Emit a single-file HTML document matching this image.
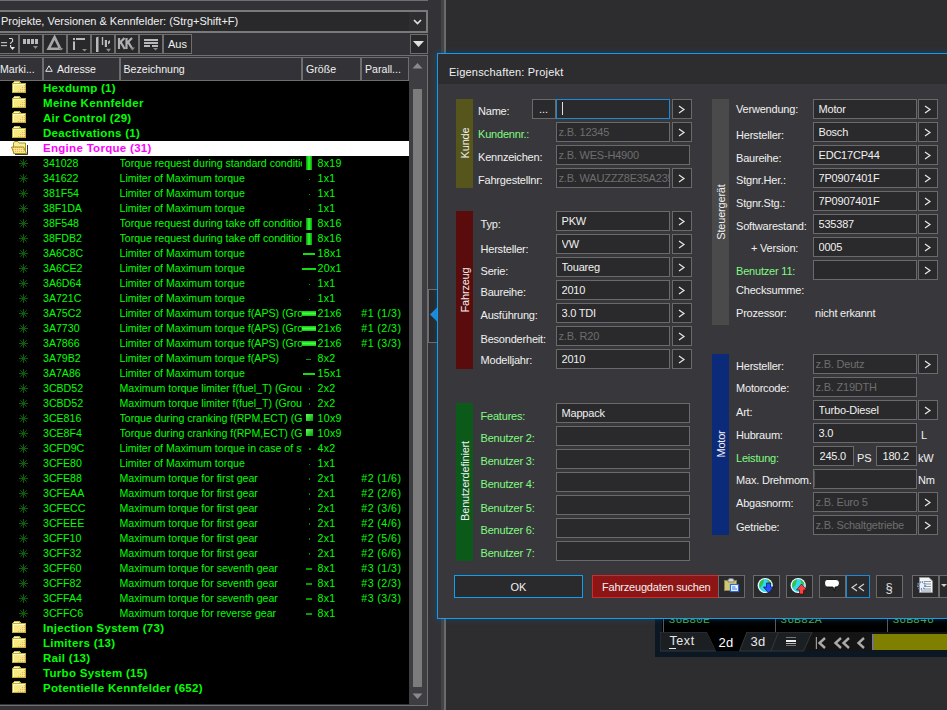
<!DOCTYPE html><html><head><meta charset="utf-8"><style>
html,body{margin:0;padding:0;}
body{width:947px;height:710px;overflow:hidden;position:relative;background:#2d2d30;font-family:"Liberation Sans",sans-serif;}
.r,.t{position:absolute;}
.t{white-space:nowrap;}
</style></head><body>
<div class="r" style="left:0px;top:0px;width:428px;height:710px;background:#333337;"></div>
<div class="r" style="left:0px;top:0px;width:428px;height:1px;background:#707070;"></div>
<div class="r" style="left:-2px;top:10px;width:430px;height:23px;background:#29292b;border:2px solid #7a7a7a;box-sizing:border-box;"></div>
<div class="r" style="left:409px;top:12px;width:17px;height:19px;background:#2e2e31;"></div>
<svg class="r" style="left:413px;top:19px;" width="9" height="6" viewBox="0 0 9 6" shape-rendering="crispEdges"><polyline points="1,1 4.5,4.5 8,1" fill="none" stroke="#e0e0e0" stroke-width="1.7" shape-rendering="auto"/></svg>
<div class="t" style="left:1px;top:15.69px;font-size:11px;line-height:11px;color:#f0f0f0;font-weight:normal;font-family:'Liberation Sans', sans-serif;">Projekte, Versionen &amp; Kennfelder: (Strg+Shift+F)</div>
<div class="r" style="left:-4px;top:34px;width:23px;height:20px;background:#29292b;border:1px solid #6e6e6e;box-sizing:border-box;"></div>
<div class="r" style="left:19px;top:34px;width:24px;height:20px;background:#29292b;border:1px solid #6e6e6e;box-sizing:border-box;"></div>
<div class="r" style="left:43px;top:34px;width:24px;height:20px;background:#29292b;border:1px solid #6e6e6e;box-sizing:border-box;"></div>
<div class="r" style="left:67px;top:34px;width:24px;height:20px;background:#29292b;border:1px solid #6e6e6e;box-sizing:border-box;"></div>
<div class="r" style="left:91px;top:34px;width:24px;height:20px;background:#29292b;border:1px solid #6e6e6e;box-sizing:border-box;"></div>
<div class="r" style="left:115px;top:34px;width:24px;height:20px;background:#29292b;border:1px solid #6e6e6e;box-sizing:border-box;"></div>
<div class="r" style="left:139px;top:34px;width:24px;height:20px;background:#29292b;border:1px solid #6e6e6e;box-sizing:border-box;"></div>
<div class="r" style="left:163px;top:34px;width:29px;height:20px;background:#29292b;border:1px solid #6e6e6e;box-sizing:border-box;"></div>
<svg class="r" style="left:0px;top:34px;shape-rendering:auto;" width="18" height="20" viewBox="0 0 18 20" shape-rendering="crispEdges"><rect x="1" y="8" width="6" height="1.2" fill="#b9b9b9"/><rect x="1" y="11" width="6" height="1.2" fill="#b9b9b9"/><path d="M9 4.5 L11.8 4.5 L12.6 5.5 L12.6 7.3 L10.6 9.2 L10.6 10" fill="none" stroke="#d8d8d8" stroke-width="1.1"/><rect x="10" y="11" width="1.2" height="2" fill="#d8d8d8"/><path d="M10 13 L15 13 L12.5 16 Z" fill="#e8e8e8"/></svg>
<svg class="r" style="left:20px;top:35px;shape-rendering:auto;" width="22" height="18" viewBox="0 0 22 18" shape-rendering="crispEdges"><rect x="3" y="4" width="3" height="5" fill="#b9b9b9"/><rect x="7" y="4" width="3" height="5" fill="#b9b9b9"/><rect x="11" y="4" width="3" height="5" fill="#b9b9b9"/><rect x="15" y="4" width="3" height="5" fill="#b9b9b9"/><path d="M13 11 L18 11 L15.5 14 Z" fill="#8a8a8a"/></svg>
<svg class="r" style="left:44px;top:35px;shape-rendering:auto;" width="22" height="18" viewBox="0 0 22 18" shape-rendering="crispEdges"><path d="M10.6 2.2 L4.6 13.8 L16.2 13.8 Z" fill="none" stroke="#a8a8a8" stroke-width="2.6" stroke-linejoin="miter"/><path d="M14.5 13 L19.2 13 L16.8 15.5 Z" fill="#8a8a8a"/></svg>
<svg class="r" style="left:68px;top:35px;shape-rendering:auto;" width="22" height="18" viewBox="0 0 22 18" shape-rendering="crispEdges"><rect x="5" y="3" width="2" height="2" fill="#b9b9b9"/><rect x="5" y="6.4" width="2" height="8.6" fill="#b9b9b9"/><rect x="8" y="3" width="9" height="2" fill="#b9b9b9"/><path d="M14 14 L19 14 L16.5 16.6 Z" fill="#8a8a8a"/></svg>
<svg class="r" style="left:92px;top:35px;shape-rendering:auto;" width="22" height="18" viewBox="0 0 22 18" shape-rendering="crispEdges"><path d="M4 2.5 L6.5 1.5 L6.5 17 L4 17 Z" fill="#b9b9b9"/><rect x="9.8" y="2" width="1.4" height="8" fill="#b9b9b9"/><rect x="12.8" y="5" width="2.2" height="7" fill="#b9b9b9"/><path d="M16 6.5 L18 5 L18 8 L16 9.5 Z" fill="#b9b9b9"/><path d="M14 13.8 L19 13.8 L16.5 16.9 Z" fill="#8a8a8a"/></svg>
<svg class="r" style="left:116px;top:35px;shape-rendering:auto;" width="22" height="18" viewBox="0 0 22 18" shape-rendering="crispEdges"><path d="M3 3 L3 14 M3 8.6 L8.5 3 M4.8 7.4 L8.8 14 M10.5 3 L10.5 14 M10.5 8.6 L16 3 M12.3 7.4 L16.5 14" fill="none" stroke="#b0b0b0" stroke-width="2.2"/><path d="M14 12.5 L19 12.5 L16.5 15.5 Z" fill="#8a8a8a"/></svg>
<svg class="r" style="left:140px;top:35px;shape-rendering:auto;" width="22" height="18" viewBox="0 0 22 18" shape-rendering="crispEdges"><rect x="4" y="4" width="14" height="2" fill="#b9b9b9"/><rect x="4" y="7" width="14" height="2" fill="#b9b9b9"/><rect x="4" y="10" width="6" height="2" fill="#b9b9b9"/><rect x="12" y="10" width="6" height="2" fill="#b9b9b9"/><path d="M13 13 L18 13 L15.5 15.5 Z" fill="#8a8a8a"/></svg>
<div class="t" style="left:168px;top:38.69px;font-size:11px;line-height:11px;color:#f0f0f0;font-weight:normal;font-family:'Liberation Sans', sans-serif;">Aus</div>
<div class="r" style="left:410px;top:34px;width:18px;height:20px;background:#29292b;border:1px solid #6e6e6e;box-sizing:border-box;"></div>
<svg class="r" style="left:412px;top:40px;" width="13" height="8" viewBox="0 0 13 8" shape-rendering="crispEdges"><path d="M1 1 L12 1 L6.5 7 Z" fill="#e0e0e0" shape-rendering="auto"/></svg>
<div class="r" style="left:0px;top:55px;width:428px;height:1px;background:#707070;"></div>
<div class="r" style="left:-2px;top:57px;width:45px;height:24px;background:#333337;border:1px solid #6e6e6e;box-sizing:border-box;"></div>
<div class="r" style="left:43px;top:57px;width:77px;height:24px;background:#333337;border:1px solid #6e6e6e;box-sizing:border-box;"></div>
<div class="r" style="left:120px;top:57px;width:182px;height:24px;background:#333337;border:1px solid #6e6e6e;box-sizing:border-box;"></div>
<div class="r" style="left:302px;top:57px;width:59px;height:24px;background:#333337;border:1px solid #6e6e6e;box-sizing:border-box;"></div>
<div class="r" style="left:361px;top:57px;width:48px;height:24px;background:#333337;border:1px solid #6e6e6e;box-sizing:border-box;"></div>
<div class="t" style="left:0px;top:64.03px;font-size:10.6px;line-height:10.6px;color:#f0f0f0;font-weight:normal;font-family:'Liberation Sans', sans-serif;">Marki...</div>
<div class="t" style="left:57px;top:64.03px;font-size:10.6px;line-height:10.6px;color:#f0f0f0;font-weight:normal;font-family:'Liberation Sans', sans-serif;">Adresse</div>
<div class="t" style="left:123.5px;top:64.03px;font-size:10.6px;line-height:10.6px;color:#f0f0f0;font-weight:normal;font-family:'Liberation Sans', sans-serif;">Bezeichnung</div>
<div class="t" style="left:306px;top:64.03px;font-size:10.6px;line-height:10.6px;color:#f0f0f0;font-weight:normal;font-family:'Liberation Sans', sans-serif;">Gr&ouml;&szlig;e</div>
<div class="t" style="left:365px;top:64.03px;font-size:10.6px;line-height:10.6px;color:#f0f0f0;font-weight:normal;font-family:'Liberation Sans', sans-serif;">Parall...</div>
<svg class="r" style="left:45px;top:65px;" width="8" height="7" viewBox="0 0 8 7" shape-rendering="crispEdges"><path d="M4 0.8 L7.3 6.3 L0.7 6.3 Z" fill="none" stroke="#e8e8e8" stroke-width="1" shape-rendering="auto"/></svg>
<div class="r" style="left:0px;top:81px;width:409px;height:623px;background:#000;"></div>
<div class="r" style="left:409px;top:56px;width:18px;height:649px;background:#3e3e42;"></div>
<div class="r" style="left:413px;top:89px;width:9px;height:598px;background:#7c7c7c;"></div>
<svg class="r" style="left:412px;top:62px;" width="11" height="7" viewBox="0 0 11 7" shape-rendering="crispEdges"><path d="M0.5 6.5 L5.5 1 L10.5 6.5 Z" fill="#8a8a8a" shape-rendering="auto"/></svg>
<svg class="r" style="left:412px;top:693px;" width="11" height="7" viewBox="0 0 11 7" shape-rendering="crispEdges"><path d="M0.5 0.5 L5.5 6 L10.5 0.5 Z" fill="#8a8a8a" shape-rendering="auto"/></svg>
<div class="r" style="left:427px;top:56px;width:1px;height:650px;background:#707070;"></div>
<div class="r" style="left:0px;top:705px;width:428px;height:1px;background:#707070;"></div>
<svg width="0" height="0" style="position:absolute"><defs><pattern id="pk" width="2" height="2" patternUnits="userSpaceOnUse"><rect x="0" y="0" width="1" height="1" fill="#f0a890"/><rect x="1" y="1" width="1" height="1" fill="#f8e880"/><rect x="1" y="0" width="1" height="1" fill="#f8e880"/><rect x="0" y="1" width="1" height="1" fill="#f8e880"/></pattern></defs></svg>
<svg class="r" style="left:12px;top:81px;" width="14" height="12" viewBox="0 0 14 12" shape-rendering="crispEdges"><path d="M1 2 L2 0 L8 0 L9 2 Z" fill="#c8b840"/><rect x="2" y="0.6" width="5" height="1" fill="#fffbe0"/><rect x="0" y="2" width="14" height="10" fill="#c0b030"/><rect x="1" y="3" width="12" height="8" fill="#f8e880"/><rect x="1" y="3" width="12" height="1" fill="#fffbd8"/><rect x="1" y="3" width="1" height="8" fill="#fffbd8"/><path d="M4 11 L13 4 L13 11 Z" fill="url(#pk)"/></svg>
<div class="t" style="left:43px;top:82.77px;font-size:11.5px;line-height:11.5px;color:#00ff00;font-weight:bold;font-family:'Liberation Sans', sans-serif;letter-spacing:0.3px;">Hexdump (1)</div>
<svg class="r" style="left:12px;top:96px;" width="14" height="12" viewBox="0 0 14 12" shape-rendering="crispEdges"><path d="M1 2 L2 0 L8 0 L9 2 Z" fill="#c8b840"/><rect x="2" y="0.6" width="5" height="1" fill="#fffbe0"/><rect x="0" y="2" width="14" height="10" fill="#c0b030"/><rect x="1" y="3" width="12" height="8" fill="#f8e880"/><rect x="1" y="3" width="12" height="1" fill="#fffbd8"/><rect x="1" y="3" width="1" height="8" fill="#fffbd8"/><path d="M4 11 L13 4 L13 11 Z" fill="url(#pk)"/></svg>
<div class="t" style="left:43px;top:97.77px;font-size:11.5px;line-height:11.5px;color:#00ff00;font-weight:bold;font-family:'Liberation Sans', sans-serif;letter-spacing:0.3px;">Meine Kennfelder</div>
<svg class="r" style="left:12px;top:111px;" width="14" height="12" viewBox="0 0 14 12" shape-rendering="crispEdges"><path d="M1 2 L2 0 L8 0 L9 2 Z" fill="#c8b840"/><rect x="2" y="0.6" width="5" height="1" fill="#fffbe0"/><rect x="0" y="2" width="14" height="10" fill="#c0b030"/><rect x="1" y="3" width="12" height="8" fill="#f8e880"/><rect x="1" y="3" width="12" height="1" fill="#fffbd8"/><rect x="1" y="3" width="1" height="8" fill="#fffbd8"/><path d="M4 11 L13 4 L13 11 Z" fill="url(#pk)"/></svg>
<div class="t" style="left:43px;top:112.77px;font-size:11.5px;line-height:11.5px;color:#00ff00;font-weight:bold;font-family:'Liberation Sans', sans-serif;letter-spacing:0.3px;">Air Control (29)</div>
<svg class="r" style="left:12px;top:126px;" width="14" height="12" viewBox="0 0 14 12" shape-rendering="crispEdges"><path d="M1 2 L2 0 L8 0 L9 2 Z" fill="#c8b840"/><rect x="2" y="0.6" width="5" height="1" fill="#fffbe0"/><rect x="0" y="2" width="14" height="10" fill="#c0b030"/><rect x="1" y="3" width="12" height="8" fill="#f8e880"/><rect x="1" y="3" width="12" height="1" fill="#fffbd8"/><rect x="1" y="3" width="1" height="8" fill="#fffbd8"/><path d="M4 11 L13 4 L13 11 Z" fill="url(#pk)"/></svg>
<div class="t" style="left:43px;top:127.77px;font-size:11.5px;line-height:11.5px;color:#00ff00;font-weight:bold;font-family:'Liberation Sans', sans-serif;letter-spacing:0.3px;">Deactivations (1)</div>
<div class="r" style="left:0px;top:141px;width:409px;height:15px;background:#fff;"></div>
<svg class="r" style="left:11px;top:141px;" width="17" height="14" viewBox="0 0 17 14" shape-rendering="crispEdges"><path d="M2.5 2 L3.5 0.5 L7 0.5 L8 2 L14.5 2 L14.5 12.5 L2.5 12.5 Z" fill="#f8ec98" stroke="#a89818" stroke-width="1" shape-rendering="auto"/><path d="M0.5 6 L12.5 6 L15.5 12.5 L3 12.5 Z" fill="url(#pk)" stroke="#a09010" stroke-width="1" shape-rendering="auto"/><path d="M4 13 L16 13 L16 4 L16.8 4 L16.8 13.8 L4 13.8 Z" fill="#000" shape-rendering="auto"/></svg>
<div class="t" style="left:43px;top:142.77px;font-size:11.5px;line-height:11.5px;color:#ff00ff;font-weight:bold;font-family:'Liberation Sans', sans-serif;letter-spacing:0.3px;">Engine Torque (31)</div>
<svg class="r" style="left:19.0px;top:159.0px;shape-rendering:auto;" width="9" height="9" viewBox="0 0 9 9" shape-rendering="crispEdges"><line x1="0.00" y1="4.50" x2="9.00" y2="4.50" stroke="#0a600a" stroke-width="1"/><line x1="1.32" y1="1.32" x2="7.68" y2="7.68" stroke="#0a600a" stroke-width="1"/><line x1="4.50" y1="0.00" x2="4.50" y2="9.00" stroke="#0a600a" stroke-width="1"/><line x1="7.68" y1="1.32" x2="1.32" y2="7.68" stroke="#0a600a" stroke-width="1"/><circle cx="4.5" cy="4.5" r="1.3" fill="#0a600a"/></svg>
<div class="t" style="left:43px;top:158.03px;font-size:10.6px;line-height:10.6px;color:#00ff00;font-weight:normal;font-family:'Liberation Sans', sans-serif;">341028</div>
<div class="t" style="left:119.5px;top:158.03px;font-size:10.6px;line-height:10.6px;color:#00ff00;font-weight:normal;font-family:'Liberation Sans', sans-serif;width:182.5px;overflow:hidden;">Torque request during standard conditions</div>
<div class="r" style="left:306px;top:156px;width:6px;height:14px;background:linear-gradient(90deg,#0a8a0a,#30ff30 50%,#0a9a0a);"></div>
<div class="t" style="left:317.5px;top:158.03px;font-size:10.6px;line-height:10.6px;color:#00ff00;font-weight:normal;font-family:'Liberation Sans', sans-serif;letter-spacing:0.3px;">8x19</div>
<svg class="r" style="left:19.0px;top:174.0px;shape-rendering:auto;" width="9" height="9" viewBox="0 0 9 9" shape-rendering="crispEdges"><line x1="0.00" y1="4.50" x2="9.00" y2="4.50" stroke="#0a600a" stroke-width="1"/><line x1="1.32" y1="1.32" x2="7.68" y2="7.68" stroke="#0a600a" stroke-width="1"/><line x1="4.50" y1="0.00" x2="4.50" y2="9.00" stroke="#0a600a" stroke-width="1"/><line x1="7.68" y1="1.32" x2="1.32" y2="7.68" stroke="#0a600a" stroke-width="1"/><circle cx="4.5" cy="4.5" r="1.3" fill="#0a600a"/></svg>
<div class="t" style="left:43px;top:173.03px;font-size:10.6px;line-height:10.6px;color:#00ff00;font-weight:normal;font-family:'Liberation Sans', sans-serif;">341622</div>
<div class="t" style="left:119.5px;top:173.03px;font-size:10.6px;line-height:10.6px;color:#00ff00;font-weight:normal;font-family:'Liberation Sans', sans-serif;width:182.5px;overflow:hidden;">Limiter of Maximum torque</div>
<div class="r" style="left:309px;top:179px;width:1px;height:1px;background:#0a8a0a;"></div>
<div class="t" style="left:317.5px;top:173.03px;font-size:10.6px;line-height:10.6px;color:#00ff00;font-weight:normal;font-family:'Liberation Sans', sans-serif;letter-spacing:0.3px;">1x1</div>
<svg class="r" style="left:19.0px;top:189.0px;shape-rendering:auto;" width="9" height="9" viewBox="0 0 9 9" shape-rendering="crispEdges"><line x1="0.00" y1="4.50" x2="9.00" y2="4.50" stroke="#0a600a" stroke-width="1"/><line x1="1.32" y1="1.32" x2="7.68" y2="7.68" stroke="#0a600a" stroke-width="1"/><line x1="4.50" y1="0.00" x2="4.50" y2="9.00" stroke="#0a600a" stroke-width="1"/><line x1="7.68" y1="1.32" x2="1.32" y2="7.68" stroke="#0a600a" stroke-width="1"/><circle cx="4.5" cy="4.5" r="1.3" fill="#0a600a"/></svg>
<div class="t" style="left:43px;top:188.03px;font-size:10.6px;line-height:10.6px;color:#00ff00;font-weight:normal;font-family:'Liberation Sans', sans-serif;">381F54</div>
<div class="t" style="left:119.5px;top:188.03px;font-size:10.6px;line-height:10.6px;color:#00ff00;font-weight:normal;font-family:'Liberation Sans', sans-serif;width:182.5px;overflow:hidden;">Limiter of Maximum torque</div>
<div class="r" style="left:309px;top:194px;width:1px;height:1px;background:#0a8a0a;"></div>
<div class="t" style="left:317.5px;top:188.03px;font-size:10.6px;line-height:10.6px;color:#00ff00;font-weight:normal;font-family:'Liberation Sans', sans-serif;letter-spacing:0.3px;">1x1</div>
<svg class="r" style="left:19.0px;top:204.0px;shape-rendering:auto;" width="9" height="9" viewBox="0 0 9 9" shape-rendering="crispEdges"><line x1="0.00" y1="4.50" x2="9.00" y2="4.50" stroke="#0a600a" stroke-width="1"/><line x1="1.32" y1="1.32" x2="7.68" y2="7.68" stroke="#0a600a" stroke-width="1"/><line x1="4.50" y1="0.00" x2="4.50" y2="9.00" stroke="#0a600a" stroke-width="1"/><line x1="7.68" y1="1.32" x2="1.32" y2="7.68" stroke="#0a600a" stroke-width="1"/><circle cx="4.5" cy="4.5" r="1.3" fill="#0a600a"/></svg>
<div class="t" style="left:43px;top:203.03px;font-size:10.6px;line-height:10.6px;color:#00ff00;font-weight:normal;font-family:'Liberation Sans', sans-serif;">38F1DA</div>
<div class="t" style="left:119.5px;top:203.03px;font-size:10.6px;line-height:10.6px;color:#00ff00;font-weight:normal;font-family:'Liberation Sans', sans-serif;width:182.5px;overflow:hidden;">Limiter of Maximum torque</div>
<div class="r" style="left:309px;top:209px;width:1px;height:1px;background:#0a8a0a;"></div>
<div class="t" style="left:317.5px;top:203.03px;font-size:10.6px;line-height:10.6px;color:#00ff00;font-weight:normal;font-family:'Liberation Sans', sans-serif;letter-spacing:0.3px;">1x1</div>
<svg class="r" style="left:19.0px;top:219.0px;shape-rendering:auto;" width="9" height="9" viewBox="0 0 9 9" shape-rendering="crispEdges"><line x1="0.00" y1="4.50" x2="9.00" y2="4.50" stroke="#0a600a" stroke-width="1"/><line x1="1.32" y1="1.32" x2="7.68" y2="7.68" stroke="#0a600a" stroke-width="1"/><line x1="4.50" y1="0.00" x2="4.50" y2="9.00" stroke="#0a600a" stroke-width="1"/><line x1="7.68" y1="1.32" x2="1.32" y2="7.68" stroke="#0a600a" stroke-width="1"/><circle cx="4.5" cy="4.5" r="1.3" fill="#0a600a"/></svg>
<div class="t" style="left:43px;top:218.03px;font-size:10.6px;line-height:10.6px;color:#00ff00;font-weight:normal;font-family:'Liberation Sans', sans-serif;">38F548</div>
<div class="t" style="left:119.5px;top:218.03px;font-size:10.6px;line-height:10.6px;color:#00ff00;font-weight:normal;font-family:'Liberation Sans', sans-serif;width:182.5px;overflow:hidden;">Torque request during take off conditions</div>
<div class="r" style="left:306px;top:218px;width:6px;height:12px;background:linear-gradient(90deg,#0a8a0a,#30ff30 50%,#0a9a0a);"></div>
<div class="t" style="left:317.5px;top:218.03px;font-size:10.6px;line-height:10.6px;color:#00ff00;font-weight:normal;font-family:'Liberation Sans', sans-serif;letter-spacing:0.3px;">8x16</div>
<svg class="r" style="left:19.0px;top:234.0px;shape-rendering:auto;" width="9" height="9" viewBox="0 0 9 9" shape-rendering="crispEdges"><line x1="0.00" y1="4.50" x2="9.00" y2="4.50" stroke="#0a600a" stroke-width="1"/><line x1="1.32" y1="1.32" x2="7.68" y2="7.68" stroke="#0a600a" stroke-width="1"/><line x1="4.50" y1="0.00" x2="4.50" y2="9.00" stroke="#0a600a" stroke-width="1"/><line x1="7.68" y1="1.32" x2="1.32" y2="7.68" stroke="#0a600a" stroke-width="1"/><circle cx="4.5" cy="4.5" r="1.3" fill="#0a600a"/></svg>
<div class="t" style="left:43px;top:233.03px;font-size:10.6px;line-height:10.6px;color:#00ff00;font-weight:normal;font-family:'Liberation Sans', sans-serif;">38FDB2</div>
<div class="t" style="left:119.5px;top:233.03px;font-size:10.6px;line-height:10.6px;color:#00ff00;font-weight:normal;font-family:'Liberation Sans', sans-serif;width:182.5px;overflow:hidden;">Torque request during take off conditions</div>
<div class="r" style="left:306px;top:233px;width:6px;height:12px;background:linear-gradient(90deg,#0a8a0a,#30ff30 50%,#0a9a0a);"></div>
<div class="t" style="left:317.5px;top:233.03px;font-size:10.6px;line-height:10.6px;color:#00ff00;font-weight:normal;font-family:'Liberation Sans', sans-serif;letter-spacing:0.3px;">8x16</div>
<svg class="r" style="left:19.0px;top:249.0px;shape-rendering:auto;" width="9" height="9" viewBox="0 0 9 9" shape-rendering="crispEdges"><line x1="0.00" y1="4.50" x2="9.00" y2="4.50" stroke="#0a600a" stroke-width="1"/><line x1="1.32" y1="1.32" x2="7.68" y2="7.68" stroke="#0a600a" stroke-width="1"/><line x1="4.50" y1="0.00" x2="4.50" y2="9.00" stroke="#0a600a" stroke-width="1"/><line x1="7.68" y1="1.32" x2="1.32" y2="7.68" stroke="#0a600a" stroke-width="1"/><circle cx="4.5" cy="4.5" r="1.3" fill="#0a600a"/></svg>
<div class="t" style="left:43px;top:248.03px;font-size:10.6px;line-height:10.6px;color:#00ff00;font-weight:normal;font-family:'Liberation Sans', sans-serif;">3A6C8C</div>
<div class="t" style="left:119.5px;top:248.03px;font-size:10.6px;line-height:10.6px;color:#00ff00;font-weight:normal;font-family:'Liberation Sans', sans-serif;width:182.5px;overflow:hidden;">Limiter of Maximum torque</div>
<div class="r" style="left:303px;top:253px;width:12px;height:2px;background:#10e010;"></div>
<div class="t" style="left:317.5px;top:248.03px;font-size:10.6px;line-height:10.6px;color:#00ff00;font-weight:normal;font-family:'Liberation Sans', sans-serif;letter-spacing:0.3px;">18x1</div>
<svg class="r" style="left:19.0px;top:264.0px;shape-rendering:auto;" width="9" height="9" viewBox="0 0 9 9" shape-rendering="crispEdges"><line x1="0.00" y1="4.50" x2="9.00" y2="4.50" stroke="#0a600a" stroke-width="1"/><line x1="1.32" y1="1.32" x2="7.68" y2="7.68" stroke="#0a600a" stroke-width="1"/><line x1="4.50" y1="0.00" x2="4.50" y2="9.00" stroke="#0a600a" stroke-width="1"/><line x1="7.68" y1="1.32" x2="1.32" y2="7.68" stroke="#0a600a" stroke-width="1"/><circle cx="4.5" cy="4.5" r="1.3" fill="#0a600a"/></svg>
<div class="t" style="left:43px;top:263.03px;font-size:10.6px;line-height:10.6px;color:#00ff00;font-weight:normal;font-family:'Liberation Sans', sans-serif;">3A6CE2</div>
<div class="t" style="left:119.5px;top:263.03px;font-size:10.6px;line-height:10.6px;color:#00ff00;font-weight:normal;font-family:'Liberation Sans', sans-serif;width:182.5px;overflow:hidden;">Limiter of Maximum torque</div>
<div class="r" style="left:302px;top:268px;width:14px;height:2px;background:#10e010;"></div>
<div class="t" style="left:317.5px;top:263.03px;font-size:10.6px;line-height:10.6px;color:#00ff00;font-weight:normal;font-family:'Liberation Sans', sans-serif;letter-spacing:0.3px;">20x1</div>
<svg class="r" style="left:19.0px;top:279.0px;shape-rendering:auto;" width="9" height="9" viewBox="0 0 9 9" shape-rendering="crispEdges"><line x1="0.00" y1="4.50" x2="9.00" y2="4.50" stroke="#0a600a" stroke-width="1"/><line x1="1.32" y1="1.32" x2="7.68" y2="7.68" stroke="#0a600a" stroke-width="1"/><line x1="4.50" y1="0.00" x2="4.50" y2="9.00" stroke="#0a600a" stroke-width="1"/><line x1="7.68" y1="1.32" x2="1.32" y2="7.68" stroke="#0a600a" stroke-width="1"/><circle cx="4.5" cy="4.5" r="1.3" fill="#0a600a"/></svg>
<div class="t" style="left:43px;top:278.03px;font-size:10.6px;line-height:10.6px;color:#00ff00;font-weight:normal;font-family:'Liberation Sans', sans-serif;">3A6D64</div>
<div class="t" style="left:119.5px;top:278.03px;font-size:10.6px;line-height:10.6px;color:#00ff00;font-weight:normal;font-family:'Liberation Sans', sans-serif;width:182.5px;overflow:hidden;">Limiter of Maximum torque</div>
<div class="r" style="left:309px;top:284px;width:1px;height:1px;background:#0a8a0a;"></div>
<div class="t" style="left:317.5px;top:278.03px;font-size:10.6px;line-height:10.6px;color:#00ff00;font-weight:normal;font-family:'Liberation Sans', sans-serif;letter-spacing:0.3px;">1x1</div>
<svg class="r" style="left:19.0px;top:294.0px;shape-rendering:auto;" width="9" height="9" viewBox="0 0 9 9" shape-rendering="crispEdges"><line x1="0.00" y1="4.50" x2="9.00" y2="4.50" stroke="#0a600a" stroke-width="1"/><line x1="1.32" y1="1.32" x2="7.68" y2="7.68" stroke="#0a600a" stroke-width="1"/><line x1="4.50" y1="0.00" x2="4.50" y2="9.00" stroke="#0a600a" stroke-width="1"/><line x1="7.68" y1="1.32" x2="1.32" y2="7.68" stroke="#0a600a" stroke-width="1"/><circle cx="4.5" cy="4.5" r="1.3" fill="#0a600a"/></svg>
<div class="t" style="left:43px;top:293.03px;font-size:10.6px;line-height:10.6px;color:#00ff00;font-weight:normal;font-family:'Liberation Sans', sans-serif;">3A721C</div>
<div class="t" style="left:119.5px;top:293.03px;font-size:10.6px;line-height:10.6px;color:#00ff00;font-weight:normal;font-family:'Liberation Sans', sans-serif;width:182.5px;overflow:hidden;">Limiter of Maximum torque</div>
<div class="r" style="left:309px;top:299px;width:1px;height:1px;background:#0a8a0a;"></div>
<div class="t" style="left:317.5px;top:293.03px;font-size:10.6px;line-height:10.6px;color:#00ff00;font-weight:normal;font-family:'Liberation Sans', sans-serif;letter-spacing:0.3px;">1x1</div>
<svg class="r" style="left:19.0px;top:309.0px;shape-rendering:auto;" width="9" height="9" viewBox="0 0 9 9" shape-rendering="crispEdges"><line x1="0.00" y1="4.50" x2="9.00" y2="4.50" stroke="#0a600a" stroke-width="1"/><line x1="1.32" y1="1.32" x2="7.68" y2="7.68" stroke="#0a600a" stroke-width="1"/><line x1="4.50" y1="0.00" x2="4.50" y2="9.00" stroke="#0a600a" stroke-width="1"/><line x1="7.68" y1="1.32" x2="1.32" y2="7.68" stroke="#0a600a" stroke-width="1"/><circle cx="4.5" cy="4.5" r="1.3" fill="#0a600a"/></svg>
<div class="t" style="left:43px;top:308.03px;font-size:10.6px;line-height:10.6px;color:#00ff00;font-weight:normal;font-family:'Liberation Sans', sans-serif;">3A75C2</div>
<div class="t" style="left:119.5px;top:308.03px;font-size:10.6px;line-height:10.6px;color:#00ff00;font-weight:normal;font-family:'Liberation Sans', sans-serif;width:182.5px;overflow:hidden;">Limiter of Maximum torque f(APS) (Group 1)</div>
<div class="r" style="left:302px;top:311px;width:14px;height:5px;background:linear-gradient(180deg,#10c010,#40ff40 50%,#10c010);"></div>
<div class="t" style="left:317.5px;top:308.03px;font-size:10.6px;line-height:10.6px;color:#00ff00;font-weight:normal;font-family:'Liberation Sans', sans-serif;letter-spacing:0.3px;">21x6</div>
<div class="t" style="left:361.3px;top:308.03px;font-size:10.6px;line-height:10.6px;color:#00ff00;font-weight:normal;font-family:'Liberation Sans', sans-serif;letter-spacing:0.45px;">#1 (1/3)</div>
<svg class="r" style="left:19.0px;top:324.0px;shape-rendering:auto;" width="9" height="9" viewBox="0 0 9 9" shape-rendering="crispEdges"><line x1="0.00" y1="4.50" x2="9.00" y2="4.50" stroke="#0a600a" stroke-width="1"/><line x1="1.32" y1="1.32" x2="7.68" y2="7.68" stroke="#0a600a" stroke-width="1"/><line x1="4.50" y1="0.00" x2="4.50" y2="9.00" stroke="#0a600a" stroke-width="1"/><line x1="7.68" y1="1.32" x2="1.32" y2="7.68" stroke="#0a600a" stroke-width="1"/><circle cx="4.5" cy="4.5" r="1.3" fill="#0a600a"/></svg>
<div class="t" style="left:43px;top:323.03px;font-size:10.6px;line-height:10.6px;color:#00ff00;font-weight:normal;font-family:'Liberation Sans', sans-serif;">3A7730</div>
<div class="t" style="left:119.5px;top:323.03px;font-size:10.6px;line-height:10.6px;color:#00ff00;font-weight:normal;font-family:'Liberation Sans', sans-serif;width:182.5px;overflow:hidden;">Limiter of Maximum torque f(APS) (Group 1)</div>
<div class="r" style="left:302px;top:326px;width:14px;height:5px;background:linear-gradient(180deg,#10c010,#40ff40 50%,#10c010);"></div>
<div class="t" style="left:317.5px;top:323.03px;font-size:10.6px;line-height:10.6px;color:#00ff00;font-weight:normal;font-family:'Liberation Sans', sans-serif;letter-spacing:0.3px;">21x6</div>
<div class="t" style="left:361.3px;top:323.03px;font-size:10.6px;line-height:10.6px;color:#00ff00;font-weight:normal;font-family:'Liberation Sans', sans-serif;letter-spacing:0.45px;">#1 (2/3)</div>
<svg class="r" style="left:19.0px;top:339.0px;shape-rendering:auto;" width="9" height="9" viewBox="0 0 9 9" shape-rendering="crispEdges"><line x1="0.00" y1="4.50" x2="9.00" y2="4.50" stroke="#0a600a" stroke-width="1"/><line x1="1.32" y1="1.32" x2="7.68" y2="7.68" stroke="#0a600a" stroke-width="1"/><line x1="4.50" y1="0.00" x2="4.50" y2="9.00" stroke="#0a600a" stroke-width="1"/><line x1="7.68" y1="1.32" x2="1.32" y2="7.68" stroke="#0a600a" stroke-width="1"/><circle cx="4.5" cy="4.5" r="1.3" fill="#0a600a"/></svg>
<div class="t" style="left:43px;top:338.03px;font-size:10.6px;line-height:10.6px;color:#00ff00;font-weight:normal;font-family:'Liberation Sans', sans-serif;">3A7866</div>
<div class="t" style="left:119.5px;top:338.03px;font-size:10.6px;line-height:10.6px;color:#00ff00;font-weight:normal;font-family:'Liberation Sans', sans-serif;width:182.5px;overflow:hidden;">Limiter of Maximum torque f(APS) (Group 1)</div>
<div class="r" style="left:302px;top:341px;width:14px;height:5px;background:linear-gradient(180deg,#10c010,#40ff40 50%,#10c010);"></div>
<div class="t" style="left:317.5px;top:338.03px;font-size:10.6px;line-height:10.6px;color:#00ff00;font-weight:normal;font-family:'Liberation Sans', sans-serif;letter-spacing:0.3px;">21x6</div>
<div class="t" style="left:361.3px;top:338.03px;font-size:10.6px;line-height:10.6px;color:#00ff00;font-weight:normal;font-family:'Liberation Sans', sans-serif;letter-spacing:0.45px;">#1 (3/3)</div>
<svg class="r" style="left:19.0px;top:354.0px;shape-rendering:auto;" width="9" height="9" viewBox="0 0 9 9" shape-rendering="crispEdges"><line x1="0.00" y1="4.50" x2="9.00" y2="4.50" stroke="#0a600a" stroke-width="1"/><line x1="1.32" y1="1.32" x2="7.68" y2="7.68" stroke="#0a600a" stroke-width="1"/><line x1="4.50" y1="0.00" x2="4.50" y2="9.00" stroke="#0a600a" stroke-width="1"/><line x1="7.68" y1="1.32" x2="1.32" y2="7.68" stroke="#0a600a" stroke-width="1"/><circle cx="4.5" cy="4.5" r="1.3" fill="#0a600a"/></svg>
<div class="t" style="left:43px;top:353.03px;font-size:10.6px;line-height:10.6px;color:#00ff00;font-weight:normal;font-family:'Liberation Sans', sans-serif;">3A79B2</div>
<div class="t" style="left:119.5px;top:353.03px;font-size:10.6px;line-height:10.6px;color:#00ff00;font-weight:normal;font-family:'Liberation Sans', sans-serif;width:182.5px;overflow:hidden;">Limiter of Maximum torque f(APS)</div>
<div class="r" style="left:306px;top:359px;width:5px;height:1px;background:#0a9a0a;"></div>
<div class="t" style="left:317.5px;top:353.03px;font-size:10.6px;line-height:10.6px;color:#00ff00;font-weight:normal;font-family:'Liberation Sans', sans-serif;letter-spacing:0.3px;">8x2</div>
<svg class="r" style="left:19.0px;top:369.0px;shape-rendering:auto;" width="9" height="9" viewBox="0 0 9 9" shape-rendering="crispEdges"><line x1="0.00" y1="4.50" x2="9.00" y2="4.50" stroke="#0a600a" stroke-width="1"/><line x1="1.32" y1="1.32" x2="7.68" y2="7.68" stroke="#0a600a" stroke-width="1"/><line x1="4.50" y1="0.00" x2="4.50" y2="9.00" stroke="#0a600a" stroke-width="1"/><line x1="7.68" y1="1.32" x2="1.32" y2="7.68" stroke="#0a600a" stroke-width="1"/><circle cx="4.5" cy="4.5" r="1.3" fill="#0a600a"/></svg>
<div class="t" style="left:43px;top:368.03px;font-size:10.6px;line-height:10.6px;color:#00ff00;font-weight:normal;font-family:'Liberation Sans', sans-serif;">3A7A86</div>
<div class="t" style="left:119.5px;top:368.03px;font-size:10.6px;line-height:10.6px;color:#00ff00;font-weight:normal;font-family:'Liberation Sans', sans-serif;width:182.5px;overflow:hidden;">Limiter of Maximum torque</div>
<div class="r" style="left:303px;top:373px;width:12px;height:2px;background:#10e010;"></div>
<div class="t" style="left:317.5px;top:368.03px;font-size:10.6px;line-height:10.6px;color:#00ff00;font-weight:normal;font-family:'Liberation Sans', sans-serif;letter-spacing:0.3px;">15x1</div>
<svg class="r" style="left:19.0px;top:384.0px;shape-rendering:auto;" width="9" height="9" viewBox="0 0 9 9" shape-rendering="crispEdges"><line x1="0.00" y1="4.50" x2="9.00" y2="4.50" stroke="#0a600a" stroke-width="1"/><line x1="1.32" y1="1.32" x2="7.68" y2="7.68" stroke="#0a600a" stroke-width="1"/><line x1="4.50" y1="0.00" x2="4.50" y2="9.00" stroke="#0a600a" stroke-width="1"/><line x1="7.68" y1="1.32" x2="1.32" y2="7.68" stroke="#0a600a" stroke-width="1"/><circle cx="4.5" cy="4.5" r="1.3" fill="#0a600a"/></svg>
<div class="t" style="left:43px;top:383.03px;font-size:10.6px;line-height:10.6px;color:#00ff00;font-weight:normal;font-family:'Liberation Sans', sans-serif;">3CBD52</div>
<div class="t" style="left:119.5px;top:383.03px;font-size:10.6px;line-height:10.6px;color:#00ff00;font-weight:normal;font-family:'Liberation Sans', sans-serif;width:182.5px;overflow:hidden;">Maximum torque limiter f(fuel_T) (Group 4)</div>
<div class="r" style="left:309px;top:388px;width:1px;height:2px;background:#0a8a0a;"></div>
<div class="t" style="left:317.5px;top:383.03px;font-size:10.6px;line-height:10.6px;color:#00ff00;font-weight:normal;font-family:'Liberation Sans', sans-serif;letter-spacing:0.3px;">2x2</div>
<svg class="r" style="left:19.0px;top:399.0px;shape-rendering:auto;" width="9" height="9" viewBox="0 0 9 9" shape-rendering="crispEdges"><line x1="0.00" y1="4.50" x2="9.00" y2="4.50" stroke="#0a600a" stroke-width="1"/><line x1="1.32" y1="1.32" x2="7.68" y2="7.68" stroke="#0a600a" stroke-width="1"/><line x1="4.50" y1="0.00" x2="4.50" y2="9.00" stroke="#0a600a" stroke-width="1"/><line x1="7.68" y1="1.32" x2="1.32" y2="7.68" stroke="#0a600a" stroke-width="1"/><circle cx="4.5" cy="4.5" r="1.3" fill="#0a600a"/></svg>
<div class="t" style="left:43px;top:398.03px;font-size:10.6px;line-height:10.6px;color:#00ff00;font-weight:normal;font-family:'Liberation Sans', sans-serif;">3CBD52</div>
<div class="t" style="left:119.5px;top:398.03px;font-size:10.6px;line-height:10.6px;color:#00ff00;font-weight:normal;font-family:'Liberation Sans', sans-serif;width:182.5px;overflow:hidden;">Maximum torque limiter f(fuel_T) (Group 4)</div>
<div class="r" style="left:309px;top:403px;width:1px;height:2px;background:#0a8a0a;"></div>
<div class="t" style="left:317.5px;top:398.03px;font-size:10.6px;line-height:10.6px;color:#00ff00;font-weight:normal;font-family:'Liberation Sans', sans-serif;letter-spacing:0.3px;">2x2</div>
<svg class="r" style="left:19.0px;top:414.0px;shape-rendering:auto;" width="9" height="9" viewBox="0 0 9 9" shape-rendering="crispEdges"><line x1="0.00" y1="4.50" x2="9.00" y2="4.50" stroke="#0a600a" stroke-width="1"/><line x1="1.32" y1="1.32" x2="7.68" y2="7.68" stroke="#0a600a" stroke-width="1"/><line x1="4.50" y1="0.00" x2="4.50" y2="9.00" stroke="#0a600a" stroke-width="1"/><line x1="7.68" y1="1.32" x2="1.32" y2="7.68" stroke="#0a600a" stroke-width="1"/><circle cx="4.5" cy="4.5" r="1.3" fill="#0a600a"/></svg>
<div class="t" style="left:43px;top:413.03px;font-size:10.6px;line-height:10.6px;color:#00ff00;font-weight:normal;font-family:'Liberation Sans', sans-serif;">3CE816</div>
<div class="t" style="left:119.5px;top:413.03px;font-size:10.6px;line-height:10.6px;color:#00ff00;font-weight:normal;font-family:'Liberation Sans', sans-serif;width:182.5px;overflow:hidden;">Torque during cranking f(RPM,ECT) (Group 5)</div>
<div class="r" style="left:306px;top:414px;width:7px;height:7px;background:linear-gradient(135deg,#60ff60,#00a000);"></div>
<div class="t" style="left:317.5px;top:413.03px;font-size:10.6px;line-height:10.6px;color:#00ff00;font-weight:normal;font-family:'Liberation Sans', sans-serif;letter-spacing:0.3px;">10x9</div>
<svg class="r" style="left:19.0px;top:429.0px;shape-rendering:auto;" width="9" height="9" viewBox="0 0 9 9" shape-rendering="crispEdges"><line x1="0.00" y1="4.50" x2="9.00" y2="4.50" stroke="#0a600a" stroke-width="1"/><line x1="1.32" y1="1.32" x2="7.68" y2="7.68" stroke="#0a600a" stroke-width="1"/><line x1="4.50" y1="0.00" x2="4.50" y2="9.00" stroke="#0a600a" stroke-width="1"/><line x1="7.68" y1="1.32" x2="1.32" y2="7.68" stroke="#0a600a" stroke-width="1"/><circle cx="4.5" cy="4.5" r="1.3" fill="#0a600a"/></svg>
<div class="t" style="left:43px;top:428.03px;font-size:10.6px;line-height:10.6px;color:#00ff00;font-weight:normal;font-family:'Liberation Sans', sans-serif;">3CE8F4</div>
<div class="t" style="left:119.5px;top:428.03px;font-size:10.6px;line-height:10.6px;color:#00ff00;font-weight:normal;font-family:'Liberation Sans', sans-serif;width:182.5px;overflow:hidden;">Torque during cranking f(RPM,ECT) (Group 5)</div>
<div class="r" style="left:306px;top:429px;width:7px;height:7px;background:linear-gradient(135deg,#60ff60,#00a000);"></div>
<div class="t" style="left:317.5px;top:428.03px;font-size:10.6px;line-height:10.6px;color:#00ff00;font-weight:normal;font-family:'Liberation Sans', sans-serif;letter-spacing:0.3px;">10x9</div>
<svg class="r" style="left:19.0px;top:444.0px;shape-rendering:auto;" width="9" height="9" viewBox="0 0 9 9" shape-rendering="crispEdges"><line x1="0.00" y1="4.50" x2="9.00" y2="4.50" stroke="#0a600a" stroke-width="1"/><line x1="1.32" y1="1.32" x2="7.68" y2="7.68" stroke="#0a600a" stroke-width="1"/><line x1="4.50" y1="0.00" x2="4.50" y2="9.00" stroke="#0a600a" stroke-width="1"/><line x1="7.68" y1="1.32" x2="1.32" y2="7.68" stroke="#0a600a" stroke-width="1"/><circle cx="4.5" cy="4.5" r="1.3" fill="#0a600a"/></svg>
<div class="t" style="left:43px;top:443.03px;font-size:10.6px;line-height:10.6px;color:#00ff00;font-weight:normal;font-family:'Liberation Sans', sans-serif;">3CFD9C</div>
<div class="t" style="left:119.5px;top:443.03px;font-size:10.6px;line-height:10.6px;color:#00ff00;font-weight:normal;font-family:'Liberation Sans', sans-serif;width:182.5px;overflow:hidden;">Limiter of Maximum torque in case of system error</div>
<div class="r" style="left:309px;top:448px;width:2px;height:2px;background:#0a8a0a;"></div>
<div class="t" style="left:317.5px;top:443.03px;font-size:10.6px;line-height:10.6px;color:#00ff00;font-weight:normal;font-family:'Liberation Sans', sans-serif;letter-spacing:0.3px;">4x2</div>
<svg class="r" style="left:19.0px;top:459.0px;shape-rendering:auto;" width="9" height="9" viewBox="0 0 9 9" shape-rendering="crispEdges"><line x1="0.00" y1="4.50" x2="9.00" y2="4.50" stroke="#0a600a" stroke-width="1"/><line x1="1.32" y1="1.32" x2="7.68" y2="7.68" stroke="#0a600a" stroke-width="1"/><line x1="4.50" y1="0.00" x2="4.50" y2="9.00" stroke="#0a600a" stroke-width="1"/><line x1="7.68" y1="1.32" x2="1.32" y2="7.68" stroke="#0a600a" stroke-width="1"/><circle cx="4.5" cy="4.5" r="1.3" fill="#0a600a"/></svg>
<div class="t" style="left:43px;top:458.03px;font-size:10.6px;line-height:10.6px;color:#00ff00;font-weight:normal;font-family:'Liberation Sans', sans-serif;">3CFE80</div>
<div class="t" style="left:119.5px;top:458.03px;font-size:10.6px;line-height:10.6px;color:#00ff00;font-weight:normal;font-family:'Liberation Sans', sans-serif;width:182.5px;overflow:hidden;">Limiter of Maximum torque</div>
<div class="r" style="left:309px;top:464px;width:1px;height:1px;background:#0a8a0a;"></div>
<div class="t" style="left:317.5px;top:458.03px;font-size:10.6px;line-height:10.6px;color:#00ff00;font-weight:normal;font-family:'Liberation Sans', sans-serif;letter-spacing:0.3px;">1x1</div>
<svg class="r" style="left:19.0px;top:474.0px;shape-rendering:auto;" width="9" height="9" viewBox="0 0 9 9" shape-rendering="crispEdges"><line x1="0.00" y1="4.50" x2="9.00" y2="4.50" stroke="#0a600a" stroke-width="1"/><line x1="1.32" y1="1.32" x2="7.68" y2="7.68" stroke="#0a600a" stroke-width="1"/><line x1="4.50" y1="0.00" x2="4.50" y2="9.00" stroke="#0a600a" stroke-width="1"/><line x1="7.68" y1="1.32" x2="1.32" y2="7.68" stroke="#0a600a" stroke-width="1"/><circle cx="4.5" cy="4.5" r="1.3" fill="#0a600a"/></svg>
<div class="t" style="left:43px;top:473.03px;font-size:10.6px;line-height:10.6px;color:#00ff00;font-weight:normal;font-family:'Liberation Sans', sans-serif;">3CFE88</div>
<div class="t" style="left:119.5px;top:473.03px;font-size:10.6px;line-height:10.6px;color:#00ff00;font-weight:normal;font-family:'Liberation Sans', sans-serif;width:182.5px;overflow:hidden;">Maximum torque for first gear</div>
<div class="r" style="left:309px;top:478px;width:1px;height:2px;background:#0a8a0a;"></div>
<div class="t" style="left:317.5px;top:473.03px;font-size:10.6px;line-height:10.6px;color:#00ff00;font-weight:normal;font-family:'Liberation Sans', sans-serif;letter-spacing:0.3px;">2x1</div>
<div class="t" style="left:361.3px;top:473.03px;font-size:10.6px;line-height:10.6px;color:#00ff00;font-weight:normal;font-family:'Liberation Sans', sans-serif;letter-spacing:0.45px;">#2 (1/6)</div>
<svg class="r" style="left:19.0px;top:489.0px;shape-rendering:auto;" width="9" height="9" viewBox="0 0 9 9" shape-rendering="crispEdges"><line x1="0.00" y1="4.50" x2="9.00" y2="4.50" stroke="#0a600a" stroke-width="1"/><line x1="1.32" y1="1.32" x2="7.68" y2="7.68" stroke="#0a600a" stroke-width="1"/><line x1="4.50" y1="0.00" x2="4.50" y2="9.00" stroke="#0a600a" stroke-width="1"/><line x1="7.68" y1="1.32" x2="1.32" y2="7.68" stroke="#0a600a" stroke-width="1"/><circle cx="4.5" cy="4.5" r="1.3" fill="#0a600a"/></svg>
<div class="t" style="left:43px;top:488.03px;font-size:10.6px;line-height:10.6px;color:#00ff00;font-weight:normal;font-family:'Liberation Sans', sans-serif;">3CFEAA</div>
<div class="t" style="left:119.5px;top:488.03px;font-size:10.6px;line-height:10.6px;color:#00ff00;font-weight:normal;font-family:'Liberation Sans', sans-serif;width:182.5px;overflow:hidden;">Maximum torque for first gear</div>
<div class="r" style="left:309px;top:493px;width:1px;height:2px;background:#0a8a0a;"></div>
<div class="t" style="left:317.5px;top:488.03px;font-size:10.6px;line-height:10.6px;color:#00ff00;font-weight:normal;font-family:'Liberation Sans', sans-serif;letter-spacing:0.3px;">2x1</div>
<div class="t" style="left:361.3px;top:488.03px;font-size:10.6px;line-height:10.6px;color:#00ff00;font-weight:normal;font-family:'Liberation Sans', sans-serif;letter-spacing:0.45px;">#2 (2/6)</div>
<svg class="r" style="left:19.0px;top:504.0px;shape-rendering:auto;" width="9" height="9" viewBox="0 0 9 9" shape-rendering="crispEdges"><line x1="0.00" y1="4.50" x2="9.00" y2="4.50" stroke="#0a600a" stroke-width="1"/><line x1="1.32" y1="1.32" x2="7.68" y2="7.68" stroke="#0a600a" stroke-width="1"/><line x1="4.50" y1="0.00" x2="4.50" y2="9.00" stroke="#0a600a" stroke-width="1"/><line x1="7.68" y1="1.32" x2="1.32" y2="7.68" stroke="#0a600a" stroke-width="1"/><circle cx="4.5" cy="4.5" r="1.3" fill="#0a600a"/></svg>
<div class="t" style="left:43px;top:503.03px;font-size:10.6px;line-height:10.6px;color:#00ff00;font-weight:normal;font-family:'Liberation Sans', sans-serif;">3CFECC</div>
<div class="t" style="left:119.5px;top:503.03px;font-size:10.6px;line-height:10.6px;color:#00ff00;font-weight:normal;font-family:'Liberation Sans', sans-serif;width:182.5px;overflow:hidden;">Maximum torque for first gear</div>
<div class="r" style="left:309px;top:508px;width:1px;height:2px;background:#0a8a0a;"></div>
<div class="t" style="left:317.5px;top:503.03px;font-size:10.6px;line-height:10.6px;color:#00ff00;font-weight:normal;font-family:'Liberation Sans', sans-serif;letter-spacing:0.3px;">2x1</div>
<div class="t" style="left:361.3px;top:503.03px;font-size:10.6px;line-height:10.6px;color:#00ff00;font-weight:normal;font-family:'Liberation Sans', sans-serif;letter-spacing:0.45px;">#2 (3/6)</div>
<svg class="r" style="left:19.0px;top:519.0px;shape-rendering:auto;" width="9" height="9" viewBox="0 0 9 9" shape-rendering="crispEdges"><line x1="0.00" y1="4.50" x2="9.00" y2="4.50" stroke="#0a600a" stroke-width="1"/><line x1="1.32" y1="1.32" x2="7.68" y2="7.68" stroke="#0a600a" stroke-width="1"/><line x1="4.50" y1="0.00" x2="4.50" y2="9.00" stroke="#0a600a" stroke-width="1"/><line x1="7.68" y1="1.32" x2="1.32" y2="7.68" stroke="#0a600a" stroke-width="1"/><circle cx="4.5" cy="4.5" r="1.3" fill="#0a600a"/></svg>
<div class="t" style="left:43px;top:518.03px;font-size:10.6px;line-height:10.6px;color:#00ff00;font-weight:normal;font-family:'Liberation Sans', sans-serif;">3CFEEE</div>
<div class="t" style="left:119.5px;top:518.03px;font-size:10.6px;line-height:10.6px;color:#00ff00;font-weight:normal;font-family:'Liberation Sans', sans-serif;width:182.5px;overflow:hidden;">Maximum torque for first gear</div>
<div class="r" style="left:309px;top:523px;width:1px;height:2px;background:#0a8a0a;"></div>
<div class="t" style="left:317.5px;top:518.03px;font-size:10.6px;line-height:10.6px;color:#00ff00;font-weight:normal;font-family:'Liberation Sans', sans-serif;letter-spacing:0.3px;">2x1</div>
<div class="t" style="left:361.3px;top:518.03px;font-size:10.6px;line-height:10.6px;color:#00ff00;font-weight:normal;font-family:'Liberation Sans', sans-serif;letter-spacing:0.45px;">#2 (4/6)</div>
<svg class="r" style="left:19.0px;top:534.0px;shape-rendering:auto;" width="9" height="9" viewBox="0 0 9 9" shape-rendering="crispEdges"><line x1="0.00" y1="4.50" x2="9.00" y2="4.50" stroke="#0a600a" stroke-width="1"/><line x1="1.32" y1="1.32" x2="7.68" y2="7.68" stroke="#0a600a" stroke-width="1"/><line x1="4.50" y1="0.00" x2="4.50" y2="9.00" stroke="#0a600a" stroke-width="1"/><line x1="7.68" y1="1.32" x2="1.32" y2="7.68" stroke="#0a600a" stroke-width="1"/><circle cx="4.5" cy="4.5" r="1.3" fill="#0a600a"/></svg>
<div class="t" style="left:43px;top:533.03px;font-size:10.6px;line-height:10.6px;color:#00ff00;font-weight:normal;font-family:'Liberation Sans', sans-serif;">3CFF10</div>
<div class="t" style="left:119.5px;top:533.03px;font-size:10.6px;line-height:10.6px;color:#00ff00;font-weight:normal;font-family:'Liberation Sans', sans-serif;width:182.5px;overflow:hidden;">Maximum torque for first gear</div>
<div class="r" style="left:309px;top:538px;width:1px;height:2px;background:#0a8a0a;"></div>
<div class="t" style="left:317.5px;top:533.03px;font-size:10.6px;line-height:10.6px;color:#00ff00;font-weight:normal;font-family:'Liberation Sans', sans-serif;letter-spacing:0.3px;">2x1</div>
<div class="t" style="left:361.3px;top:533.03px;font-size:10.6px;line-height:10.6px;color:#00ff00;font-weight:normal;font-family:'Liberation Sans', sans-serif;letter-spacing:0.45px;">#2 (5/6)</div>
<svg class="r" style="left:19.0px;top:549.0px;shape-rendering:auto;" width="9" height="9" viewBox="0 0 9 9" shape-rendering="crispEdges"><line x1="0.00" y1="4.50" x2="9.00" y2="4.50" stroke="#0a600a" stroke-width="1"/><line x1="1.32" y1="1.32" x2="7.68" y2="7.68" stroke="#0a600a" stroke-width="1"/><line x1="4.50" y1="0.00" x2="4.50" y2="9.00" stroke="#0a600a" stroke-width="1"/><line x1="7.68" y1="1.32" x2="1.32" y2="7.68" stroke="#0a600a" stroke-width="1"/><circle cx="4.5" cy="4.5" r="1.3" fill="#0a600a"/></svg>
<div class="t" style="left:43px;top:548.03px;font-size:10.6px;line-height:10.6px;color:#00ff00;font-weight:normal;font-family:'Liberation Sans', sans-serif;">3CFF32</div>
<div class="t" style="left:119.5px;top:548.03px;font-size:10.6px;line-height:10.6px;color:#00ff00;font-weight:normal;font-family:'Liberation Sans', sans-serif;width:182.5px;overflow:hidden;">Maximum torque for first gear</div>
<div class="r" style="left:309px;top:553px;width:1px;height:2px;background:#0a8a0a;"></div>
<div class="t" style="left:317.5px;top:548.03px;font-size:10.6px;line-height:10.6px;color:#00ff00;font-weight:normal;font-family:'Liberation Sans', sans-serif;letter-spacing:0.3px;">2x1</div>
<div class="t" style="left:361.3px;top:548.03px;font-size:10.6px;line-height:10.6px;color:#00ff00;font-weight:normal;font-family:'Liberation Sans', sans-serif;letter-spacing:0.45px;">#2 (6/6)</div>
<svg class="r" style="left:19.0px;top:564.0px;shape-rendering:auto;" width="9" height="9" viewBox="0 0 9 9" shape-rendering="crispEdges"><line x1="0.00" y1="4.50" x2="9.00" y2="4.50" stroke="#0a600a" stroke-width="1"/><line x1="1.32" y1="1.32" x2="7.68" y2="7.68" stroke="#0a600a" stroke-width="1"/><line x1="4.50" y1="0.00" x2="4.50" y2="9.00" stroke="#0a600a" stroke-width="1"/><line x1="7.68" y1="1.32" x2="1.32" y2="7.68" stroke="#0a600a" stroke-width="1"/><circle cx="4.5" cy="4.5" r="1.3" fill="#0a600a"/></svg>
<div class="t" style="left:43px;top:563.03px;font-size:10.6px;line-height:10.6px;color:#00ff00;font-weight:normal;font-family:'Liberation Sans', sans-serif;">3CFF60</div>
<div class="t" style="left:119.5px;top:563.03px;font-size:10.6px;line-height:10.6px;color:#00ff00;font-weight:normal;font-family:'Liberation Sans', sans-serif;width:182.5px;overflow:hidden;">Maximum torque for seventh gear</div>
<div class="r" style="left:306px;top:568px;width:6px;height:2px;background:#0a9a0a;"></div>
<div class="t" style="left:317.5px;top:563.03px;font-size:10.6px;line-height:10.6px;color:#00ff00;font-weight:normal;font-family:'Liberation Sans', sans-serif;letter-spacing:0.3px;">8x1</div>
<div class="t" style="left:361.3px;top:563.03px;font-size:10.6px;line-height:10.6px;color:#00ff00;font-weight:normal;font-family:'Liberation Sans', sans-serif;letter-spacing:0.45px;">#3 (1/3)</div>
<svg class="r" style="left:19.0px;top:579.0px;shape-rendering:auto;" width="9" height="9" viewBox="0 0 9 9" shape-rendering="crispEdges"><line x1="0.00" y1="4.50" x2="9.00" y2="4.50" stroke="#0a600a" stroke-width="1"/><line x1="1.32" y1="1.32" x2="7.68" y2="7.68" stroke="#0a600a" stroke-width="1"/><line x1="4.50" y1="0.00" x2="4.50" y2="9.00" stroke="#0a600a" stroke-width="1"/><line x1="7.68" y1="1.32" x2="1.32" y2="7.68" stroke="#0a600a" stroke-width="1"/><circle cx="4.5" cy="4.5" r="1.3" fill="#0a600a"/></svg>
<div class="t" style="left:43px;top:578.03px;font-size:10.6px;line-height:10.6px;color:#00ff00;font-weight:normal;font-family:'Liberation Sans', sans-serif;">3CFF82</div>
<div class="t" style="left:119.5px;top:578.03px;font-size:10.6px;line-height:10.6px;color:#00ff00;font-weight:normal;font-family:'Liberation Sans', sans-serif;width:182.5px;overflow:hidden;">Maximum torque for seventh gear</div>
<div class="r" style="left:306px;top:583px;width:6px;height:2px;background:#0a9a0a;"></div>
<div class="t" style="left:317.5px;top:578.03px;font-size:10.6px;line-height:10.6px;color:#00ff00;font-weight:normal;font-family:'Liberation Sans', sans-serif;letter-spacing:0.3px;">8x1</div>
<div class="t" style="left:361.3px;top:578.03px;font-size:10.6px;line-height:10.6px;color:#00ff00;font-weight:normal;font-family:'Liberation Sans', sans-serif;letter-spacing:0.45px;">#3 (2/3)</div>
<svg class="r" style="left:19.0px;top:594.0px;shape-rendering:auto;" width="9" height="9" viewBox="0 0 9 9" shape-rendering="crispEdges"><line x1="0.00" y1="4.50" x2="9.00" y2="4.50" stroke="#0a600a" stroke-width="1"/><line x1="1.32" y1="1.32" x2="7.68" y2="7.68" stroke="#0a600a" stroke-width="1"/><line x1="4.50" y1="0.00" x2="4.50" y2="9.00" stroke="#0a600a" stroke-width="1"/><line x1="7.68" y1="1.32" x2="1.32" y2="7.68" stroke="#0a600a" stroke-width="1"/><circle cx="4.5" cy="4.5" r="1.3" fill="#0a600a"/></svg>
<div class="t" style="left:43px;top:593.03px;font-size:10.6px;line-height:10.6px;color:#00ff00;font-weight:normal;font-family:'Liberation Sans', sans-serif;">3CFFA4</div>
<div class="t" style="left:119.5px;top:593.03px;font-size:10.6px;line-height:10.6px;color:#00ff00;font-weight:normal;font-family:'Liberation Sans', sans-serif;width:182.5px;overflow:hidden;">Maximum torque for seventh gear</div>
<div class="r" style="left:306px;top:598px;width:6px;height:2px;background:#0a9a0a;"></div>
<div class="t" style="left:317.5px;top:593.03px;font-size:10.6px;line-height:10.6px;color:#00ff00;font-weight:normal;font-family:'Liberation Sans', sans-serif;letter-spacing:0.3px;">8x1</div>
<div class="t" style="left:361.3px;top:593.03px;font-size:10.6px;line-height:10.6px;color:#00ff00;font-weight:normal;font-family:'Liberation Sans', sans-serif;letter-spacing:0.45px;">#3 (3/3)</div>
<svg class="r" style="left:19.0px;top:609.0px;shape-rendering:auto;" width="9" height="9" viewBox="0 0 9 9" shape-rendering="crispEdges"><line x1="0.00" y1="4.50" x2="9.00" y2="4.50" stroke="#0a600a" stroke-width="1"/><line x1="1.32" y1="1.32" x2="7.68" y2="7.68" stroke="#0a600a" stroke-width="1"/><line x1="4.50" y1="0.00" x2="4.50" y2="9.00" stroke="#0a600a" stroke-width="1"/><line x1="7.68" y1="1.32" x2="1.32" y2="7.68" stroke="#0a600a" stroke-width="1"/><circle cx="4.5" cy="4.5" r="1.3" fill="#0a600a"/></svg>
<div class="t" style="left:43px;top:608.03px;font-size:10.6px;line-height:10.6px;color:#00ff00;font-weight:normal;font-family:'Liberation Sans', sans-serif;">3CFFC6</div>
<div class="t" style="left:119.5px;top:608.03px;font-size:10.6px;line-height:10.6px;color:#00ff00;font-weight:normal;font-family:'Liberation Sans', sans-serif;width:182.5px;overflow:hidden;">Maximum torque for reverse gear</div>
<div class="r" style="left:306px;top:613px;width:6px;height:2px;background:#0a9a0a;"></div>
<div class="t" style="left:317.5px;top:608.03px;font-size:10.6px;line-height:10.6px;color:#00ff00;font-weight:normal;font-family:'Liberation Sans', sans-serif;letter-spacing:0.3px;">8x1</div>
<svg class="r" style="left:12px;top:621px;" width="14" height="12" viewBox="0 0 14 12" shape-rendering="crispEdges"><path d="M1 2 L2 0 L8 0 L9 2 Z" fill="#c8b840"/><rect x="2" y="0.6" width="5" height="1" fill="#fffbe0"/><rect x="0" y="2" width="14" height="10" fill="#c0b030"/><rect x="1" y="3" width="12" height="8" fill="#f8e880"/><rect x="1" y="3" width="12" height="1" fill="#fffbd8"/><rect x="1" y="3" width="1" height="8" fill="#fffbd8"/><path d="M4 11 L13 4 L13 11 Z" fill="url(#pk)"/></svg>
<div class="t" style="left:43px;top:622.77px;font-size:11.5px;line-height:11.5px;color:#00ff00;font-weight:bold;font-family:'Liberation Sans', sans-serif;letter-spacing:0.3px;">Injection System (73)</div>
<svg class="r" style="left:12px;top:636px;" width="14" height="12" viewBox="0 0 14 12" shape-rendering="crispEdges"><path d="M1 2 L2 0 L8 0 L9 2 Z" fill="#c8b840"/><rect x="2" y="0.6" width="5" height="1" fill="#fffbe0"/><rect x="0" y="2" width="14" height="10" fill="#c0b030"/><rect x="1" y="3" width="12" height="8" fill="#f8e880"/><rect x="1" y="3" width="12" height="1" fill="#fffbd8"/><rect x="1" y="3" width="1" height="8" fill="#fffbd8"/><path d="M4 11 L13 4 L13 11 Z" fill="url(#pk)"/></svg>
<div class="t" style="left:43px;top:637.77px;font-size:11.5px;line-height:11.5px;color:#00ff00;font-weight:bold;font-family:'Liberation Sans', sans-serif;letter-spacing:0.3px;">Limiters (13)</div>
<svg class="r" style="left:12px;top:651px;" width="14" height="12" viewBox="0 0 14 12" shape-rendering="crispEdges"><path d="M1 2 L2 0 L8 0 L9 2 Z" fill="#c8b840"/><rect x="2" y="0.6" width="5" height="1" fill="#fffbe0"/><rect x="0" y="2" width="14" height="10" fill="#c0b030"/><rect x="1" y="3" width="12" height="8" fill="#f8e880"/><rect x="1" y="3" width="12" height="1" fill="#fffbd8"/><rect x="1" y="3" width="1" height="8" fill="#fffbd8"/><path d="M4 11 L13 4 L13 11 Z" fill="url(#pk)"/></svg>
<div class="t" style="left:43px;top:652.77px;font-size:11.5px;line-height:11.5px;color:#00ff00;font-weight:bold;font-family:'Liberation Sans', sans-serif;letter-spacing:0.3px;">Rail (13)</div>
<svg class="r" style="left:12px;top:666px;" width="14" height="12" viewBox="0 0 14 12" shape-rendering="crispEdges"><path d="M1 2 L2 0 L8 0 L9 2 Z" fill="#c8b840"/><rect x="2" y="0.6" width="5" height="1" fill="#fffbe0"/><rect x="0" y="2" width="14" height="10" fill="#c0b030"/><rect x="1" y="3" width="12" height="8" fill="#f8e880"/><rect x="1" y="3" width="12" height="1" fill="#fffbd8"/><rect x="1" y="3" width="1" height="8" fill="#fffbd8"/><path d="M4 11 L13 4 L13 11 Z" fill="url(#pk)"/></svg>
<div class="t" style="left:43px;top:667.77px;font-size:11.5px;line-height:11.5px;color:#00ff00;font-weight:bold;font-family:'Liberation Sans', sans-serif;letter-spacing:0.3px;">Turbo System (15)</div>
<svg class="r" style="left:12px;top:681px;" width="14" height="12" viewBox="0 0 14 12" shape-rendering="crispEdges"><path d="M1 2 L2 0 L8 0 L9 2 Z" fill="#c8b840"/><rect x="2" y="0.6" width="5" height="1" fill="#fffbe0"/><rect x="0" y="2" width="14" height="10" fill="#c0b030"/><rect x="1" y="3" width="12" height="8" fill="#f8e880"/><rect x="1" y="3" width="12" height="1" fill="#fffbd8"/><rect x="1" y="3" width="1" height="8" fill="#fffbd8"/><path d="M4 11 L13 4 L13 11 Z" fill="url(#pk)"/></svg>
<div class="t" style="left:43px;top:682.77px;font-size:11.5px;line-height:11.5px;color:#00ff00;font-weight:bold;font-family:'Liberation Sans', sans-serif;letter-spacing:0.3px;">Potentielle Kennfelder (652)</div>
<div class="r" style="left:428px;top:0px;width:13px;height:710px;background:#333337;"></div>
<div class="r" style="left:441px;top:0px;width:4px;height:710px;background:#444448;"></div>
<div class="r" style="left:444px;top:0px;width:2px;height:710px;background:#6a6a6a;"></div>
<div class="r" style="left:446px;top:0px;width:501px;height:710px;background:#2d2d30;"></div>
<div class="r" style="left:428px;top:289px;width:10px;height:54px;background:#29292b;border:1px solid #6e6e6e;box-sizing:border-box;"></div>
<svg class="r" style="left:429px;top:307px;" width="9" height="15" viewBox="0 0 9 15" shape-rendering="crispEdges"><path d="M8.5 0 L1 7.5 L8.5 15 Z" fill="#1e8de0" shape-rendering="auto"/></svg>
<div class="r" style="left:655px;top:600px;width:292px;height:57px;background:#0b1722;"></div>
<div class="r" style="left:662px;top:600px;width:285px;height:32px;background:linear-gradient(180deg,#10161c 0px,#000 8px);"></div>
<div class="r" style="left:663px;top:600px;width:1px;height:32px;background:#5a5a5a;"></div>
<div class="r" style="left:775px;top:600px;width:1px;height:32px;background:#5a5a5a;"></div>
<div class="r" style="left:887px;top:600px;width:1px;height:32px;background:#5a5a5a;"></div>
<div class="t" style="left:668.5px;top:614.27px;font-size:11.5px;line-height:11.5px;color:#4cae4c;font-weight:normal;font-family:'Liberation Mono', monospace;">36B80E</div>
<div class="t" style="left:780.3px;top:614.27px;font-size:11.5px;line-height:11.5px;color:#4cae4c;font-weight:normal;font-family:'Liberation Mono', monospace;">36B82A</div>
<div class="t" style="left:892.4px;top:614.27px;font-size:11.5px;line-height:11.5px;color:#4cae4c;font-weight:normal;font-family:'Liberation Mono', monospace;">36B846</div>
<div class="r" style="left:660px;top:632px;width:287px;height:19px;background:#141414;"></div>
<svg class="r" style="left:660px;top:632px;shape-rendering:auto;" width="160" height="20" viewBox="0 0 160 20" shape-rendering="crispEdges"><path d="M0 0 L47 0 L56 19 L0 19 Z" fill="#1c1f22" stroke="#33373b" stroke-width="1"/><path d="M56 19 L47 0 L87 0 L79.5 19 Z" fill="#000"/><path d="M79.5 19 L87 0 L119 0 L111 19 Z" fill="#1c1f22" stroke="#33373b" stroke-width="1"/><path d="M111 19 L118.4 0 L152 0 L143.6 19 Z" fill="#1c1f22" stroke="#33373b" stroke-width="1"/></svg>
<div class="t" style="left:669.4px;top:635.42px;font-size:12.5px;line-height:12.5px;color:#e8e8e8;font-weight:normal;font-family:'Liberation Sans', sans-serif;letter-spacing:0.6px;">Text</div>
<div class="r" style="left:669px;top:648px;width:7px;height:1px;background:#e8e8e8;"></div>
<div class="t" style="left:718.4px;top:636.00px;font-size:13px;line-height:13px;color:#ffffff;font-weight:normal;font-family:'Liberation Sans', sans-serif;letter-spacing:0.3px;">2d</div>
<div class="t" style="left:750.5px;top:634.50px;font-size:13px;line-height:13px;color:#e8e8e8;font-weight:normal;font-family:'Liberation Sans', sans-serif;letter-spacing:0.3px;">3d</div>
<svg class="r" style="left:786px;top:637px;" width="10" height="9" viewBox="0 0 10 9" shape-rendering="crispEdges"><rect x="0" y="0" width="10" height="1" fill="#777"/><rect x="0" y="3" width="10" height="1.5" fill="#eee"/><rect x="0" y="6" width="10" height="1" fill="#bbb"/><rect x="0" y="8" width="10" height="1" fill="#777"/></svg>
<svg class="r" style="left:812px;top:636px;shape-rendering:auto;" width="60" height="15" viewBox="0 0 60 15" shape-rendering="crispEdges"><rect x="3.8" y="1" width="1.2" height="12" fill="#999"/><path d="M13 2 L7.5 7 L13 12" fill="none" stroke="#aaa" stroke-width="2.4"/><path d="M29 2 L23.5 7 L29 12" fill="none" stroke="#aaa" stroke-width="2.4"/><path d="M37 2 L31.5 7 L37 12" fill="none" stroke="#aaa" stroke-width="2.4"/><path d="M52 2 L46.5 7 L52 12" fill="none" stroke="#aaa" stroke-width="2.4"/></svg>
<div class="r" style="left:872px;top:634px;width:75px;height:16px;background:#808000;"></div>
<div class="r" style="left:872px;top:634px;width:1px;height:16px;background:#6a6aff;"></div>
<div class="r" style="left:437px;top:53px;width:520px;height:566px;background:#38383c;border:1px solid #0ea0f0;box-sizing:border-box;box-shadow:0 0 6px 1px rgba(20,110,170,0.28);"></div>
<div class="r" style="left:438px;top:54px;width:518px;height:30px;background:#2d2d30;"></div>
<div class="t" style="left:449px;top:66.69px;font-size:11px;line-height:11px;color:#f0f0f0;font-weight:normal;font-family:'Liberation Sans', sans-serif;letter-spacing:0.2px;">Eigenschaften: Projekt</div>
<div class="r" style="left:456px;top:99px;width:17px;height:89px;background:#56561c;"></div>
<div class="t" style="left:456px;top:99px;width:17px;height:89px;"><div style="position:absolute;left:50%;top:44px;transform:translate(-50%,-50%) rotate(-90deg);font-size:11px;line-height:11px;color:#f0f0f0;white-space:nowrap;letter-spacing:-0.2px;">Kunde</div></div>
<div class="t" style="left:478px;top:105.69px;font-size:11px;line-height:11px;color:#f0f0f0;font-weight:normal;font-family:'Liberation Sans', sans-serif;letter-spacing:-0.2px;">Name:</div>
<div class="t" style="left:478px;top:128.69px;font-size:11px;line-height:11px;color:#80fa80;font-weight:normal;font-family:'Liberation Sans', sans-serif;letter-spacing:-0.2px;">Kundennr.:</div>
<div class="t" style="left:478px;top:151.69px;font-size:11px;line-height:11px;color:#f0f0f0;font-weight:normal;font-family:'Liberation Sans', sans-serif;letter-spacing:-0.2px;">Kennzeichen:</div>
<div class="t" style="left:478px;top:174.69px;font-size:11px;line-height:11px;color:#f0f0f0;font-weight:normal;font-family:'Liberation Sans', sans-serif;letter-spacing:-0.2px;">Fahrgestellnr:</div>
<div class="r" style="left:532px;top:99px;width:24px;height:20px;background:#2a2a2c;border:1px solid #6a6a6a;box-sizing:border-box;"></div>
<div class="t" style="left:539px;top:103.69px;font-size:11px;line-height:11px;color:#f0f0f0;font-weight:normal;font-family:'Liberation Sans', sans-serif;">...</div>
<div class="r" style="left:556px;top:99px;width:114px;height:20px;background:#2a2a2c;border:1px solid #1c8ad8;box-sizing:border-box;"></div>
<div class="r" style="left:562px;top:102px;width:1px;height:13px;background:#e0e0e0;"></div>
<div class="r" style="left:672px;top:99px;width:20px;height:20px;background:#2a2a2c;border:1px solid #6a6a6a;box-sizing:border-box;"></div>
<svg class="r" style="left:678px;top:105px;shape-rendering:auto;" width="8" height="9" viewBox="0 0 8 9" shape-rendering="crispEdges"><polyline points="1,1 6,4.5 1,8" fill="none" stroke="#e8e8e8" stroke-width="1.2"/></svg>
<div class="r" style="left:556px;top:122px;width:114px;height:20px;background:#2a2a2c;border:1px solid #6a6a6a;box-sizing:border-box;"></div>
<div class="t" style="left:558.5px;top:126.69px;font-size:11px;line-height:11px;color:#6e6e6e;font-weight:normal;font-family:'Liberation Sans', sans-serif;letter-spacing:-0.2px;width:110.5px;overflow:hidden;">z.B. 12345</div>
<div class="r" style="left:672px;top:122px;width:20px;height:20px;background:#2a2a2c;border:1px solid #6a6a6a;box-sizing:border-box;"></div>
<svg class="r" style="left:678px;top:128px;shape-rendering:auto;" width="8" height="9" viewBox="0 0 8 9" shape-rendering="crispEdges"><polyline points="1,1 6,4.5 1,8" fill="none" stroke="#e8e8e8" stroke-width="1.2"/></svg>
<div class="r" style="left:556px;top:145px;width:134px;height:20px;background:#2a2a2c;border:1px solid #6a6a6a;box-sizing:border-box;"></div>
<div class="t" style="left:558.5px;top:149.69px;font-size:11px;line-height:11px;color:#6e6e6e;font-weight:normal;font-family:'Liberation Sans', sans-serif;letter-spacing:-0.2px;width:130.5px;overflow:hidden;">z.B. WES-H4900</div>
<div class="r" style="left:556px;top:168px;width:114px;height:20px;background:#2a2a2c;border:1px solid #6a6a6a;box-sizing:border-box;"></div>
<div class="t" style="left:558.5px;top:172.69px;font-size:11px;line-height:11px;color:#6e6e6e;font-weight:normal;font-family:'Liberation Sans', sans-serif;letter-spacing:-0.2px;width:110.5px;overflow:hidden;">z.B. WAUZZZ8E35A235</div>
<div class="r" style="left:672px;top:168px;width:20px;height:20px;background:#2a2a2c;border:1px solid #6a6a6a;box-sizing:border-box;"></div>
<svg class="r" style="left:678px;top:174px;shape-rendering:auto;" width="8" height="9" viewBox="0 0 8 9" shape-rendering="crispEdges"><polyline points="1,1 6,4.5 1,8" fill="none" stroke="#e8e8e8" stroke-width="1.2"/></svg>
<div class="r" style="left:456px;top:211px;width:17px;height:158px;background:#5a0b0b;"></div>
<div class="t" style="left:456px;top:211px;width:17px;height:158px;"><div style="position:absolute;left:50%;top:78.5px;transform:translate(-50%,-50%) rotate(-90deg);font-size:11px;line-height:11px;color:#f0f0f0;white-space:nowrap;letter-spacing:-0.2px;">Fahrzeug</div></div>
<div class="t" style="left:480.5px;top:218.69px;font-size:11px;line-height:11px;color:#f0f0f0;font-weight:normal;font-family:'Liberation Sans', sans-serif;letter-spacing:-0.2px;">Typ:</div>
<div class="r" style="left:556px;top:211px;width:114px;height:20px;background:#2a2a2c;border:1px solid #6a6a6a;box-sizing:border-box;"></div>
<div class="t" style="left:561.5px;top:215.69px;font-size:11px;line-height:11px;color:#f0f0f0;font-weight:normal;font-family:'Liberation Sans', sans-serif;letter-spacing:-0.2px;width:107.5px;overflow:hidden;">PKW</div>
<div class="r" style="left:672px;top:211px;width:20px;height:20px;background:#2a2a2c;border:1px solid #6a6a6a;box-sizing:border-box;"></div>
<svg class="r" style="left:678px;top:217px;shape-rendering:auto;" width="8" height="9" viewBox="0 0 8 9" shape-rendering="crispEdges"><polyline points="1,1 6,4.5 1,8" fill="none" stroke="#e8e8e8" stroke-width="1.2"/></svg>
<div class="t" style="left:480.5px;top:243.69px;font-size:11px;line-height:11px;color:#f0f0f0;font-weight:normal;font-family:'Liberation Sans', sans-serif;letter-spacing:-0.2px;">Hersteller:</div>
<div class="r" style="left:556px;top:234px;width:114px;height:20px;background:#2a2a2c;border:1px solid #6a6a6a;box-sizing:border-box;"></div>
<div class="t" style="left:561.5px;top:238.69px;font-size:11px;line-height:11px;color:#f0f0f0;font-weight:normal;font-family:'Liberation Sans', sans-serif;letter-spacing:-0.2px;width:107.5px;overflow:hidden;">VW</div>
<div class="r" style="left:672px;top:234px;width:20px;height:20px;background:#2a2a2c;border:1px solid #6a6a6a;box-sizing:border-box;"></div>
<svg class="r" style="left:678px;top:240px;shape-rendering:auto;" width="8" height="9" viewBox="0 0 8 9" shape-rendering="crispEdges"><polyline points="1,1 6,4.5 1,8" fill="none" stroke="#e8e8e8" stroke-width="1.2"/></svg>
<div class="t" style="left:480.5px;top:265.69px;font-size:11px;line-height:11px;color:#f0f0f0;font-weight:normal;font-family:'Liberation Sans', sans-serif;letter-spacing:-0.2px;">Serie:</div>
<div class="r" style="left:556px;top:257px;width:114px;height:20px;background:#2a2a2c;border:1px solid #6a6a6a;box-sizing:border-box;"></div>
<div class="t" style="left:561.5px;top:261.69px;font-size:11px;line-height:11px;color:#f0f0f0;font-weight:normal;font-family:'Liberation Sans', sans-serif;letter-spacing:-0.2px;width:107.5px;overflow:hidden;">Touareg</div>
<div class="r" style="left:672px;top:257px;width:20px;height:20px;background:#2a2a2c;border:1px solid #6a6a6a;box-sizing:border-box;"></div>
<svg class="r" style="left:678px;top:263px;shape-rendering:auto;" width="8" height="9" viewBox="0 0 8 9" shape-rendering="crispEdges"><polyline points="1,1 6,4.5 1,8" fill="none" stroke="#e8e8e8" stroke-width="1.2"/></svg>
<div class="t" style="left:480.5px;top:286.69px;font-size:11px;line-height:11px;color:#f0f0f0;font-weight:normal;font-family:'Liberation Sans', sans-serif;letter-spacing:-0.2px;">Baureihe:</div>
<div class="r" style="left:556px;top:280px;width:114px;height:20px;background:#2a2a2c;border:1px solid #6a6a6a;box-sizing:border-box;"></div>
<div class="t" style="left:561.5px;top:284.69px;font-size:11px;line-height:11px;color:#f0f0f0;font-weight:normal;font-family:'Liberation Sans', sans-serif;letter-spacing:-0.2px;width:107.5px;overflow:hidden;">2010</div>
<div class="r" style="left:672px;top:280px;width:20px;height:20px;background:#2a2a2c;border:1px solid #6a6a6a;box-sizing:border-box;"></div>
<svg class="r" style="left:678px;top:286px;shape-rendering:auto;" width="8" height="9" viewBox="0 0 8 9" shape-rendering="crispEdges"><polyline points="1,1 6,4.5 1,8" fill="none" stroke="#e8e8e8" stroke-width="1.2"/></svg>
<div class="t" style="left:480.5px;top:309.69px;font-size:11px;line-height:11px;color:#f0f0f0;font-weight:normal;font-family:'Liberation Sans', sans-serif;letter-spacing:-0.2px;">Ausf&uuml;hrung:</div>
<div class="r" style="left:556px;top:303px;width:114px;height:20px;background:#2a2a2c;border:1px solid #6a6a6a;box-sizing:border-box;"></div>
<div class="t" style="left:561.5px;top:307.69px;font-size:11px;line-height:11px;color:#f0f0f0;font-weight:normal;font-family:'Liberation Sans', sans-serif;letter-spacing:-0.2px;width:107.5px;overflow:hidden;">3.0 TDI</div>
<div class="r" style="left:672px;top:303px;width:20px;height:20px;background:#2a2a2c;border:1px solid #6a6a6a;box-sizing:border-box;"></div>
<svg class="r" style="left:678px;top:309px;shape-rendering:auto;" width="8" height="9" viewBox="0 0 8 9" shape-rendering="crispEdges"><polyline points="1,1 6,4.5 1,8" fill="none" stroke="#e8e8e8" stroke-width="1.2"/></svg>
<div class="t" style="left:480.5px;top:333.69px;font-size:11px;line-height:11px;color:#f0f0f0;font-weight:normal;font-family:'Liberation Sans', sans-serif;letter-spacing:-0.2px;">Besonderheit:</div>
<div class="r" style="left:556px;top:326px;width:114px;height:20px;background:#2a2a2c;border:1px solid #6a6a6a;box-sizing:border-box;"></div>
<div class="t" style="left:558.5px;top:330.69px;font-size:11px;line-height:11px;color:#6e6e6e;font-weight:normal;font-family:'Liberation Sans', sans-serif;letter-spacing:-0.2px;width:110.5px;overflow:hidden;">z.B. R20</div>
<div class="r" style="left:672px;top:326px;width:20px;height:20px;background:#2a2a2c;border:1px solid #6a6a6a;box-sizing:border-box;"></div>
<svg class="r" style="left:678px;top:332px;shape-rendering:auto;" width="8" height="9" viewBox="0 0 8 9" shape-rendering="crispEdges"><polyline points="1,1 6,4.5 1,8" fill="none" stroke="#e8e8e8" stroke-width="1.2"/></svg>
<div class="t" style="left:480.5px;top:354.69px;font-size:11px;line-height:11px;color:#f0f0f0;font-weight:normal;font-family:'Liberation Sans', sans-serif;letter-spacing:-0.2px;">Modelljahr:</div>
<div class="r" style="left:556px;top:349px;width:114px;height:20px;background:#2a2a2c;border:1px solid #6a6a6a;box-sizing:border-box;"></div>
<div class="t" style="left:561.5px;top:353.69px;font-size:11px;line-height:11px;color:#f0f0f0;font-weight:normal;font-family:'Liberation Sans', sans-serif;letter-spacing:-0.2px;width:107.5px;overflow:hidden;">2010</div>
<div class="r" style="left:672px;top:349px;width:20px;height:20px;background:#2a2a2c;border:1px solid #6a6a6a;box-sizing:border-box;"></div>
<svg class="r" style="left:678px;top:355px;shape-rendering:auto;" width="8" height="9" viewBox="0 0 8 9" shape-rendering="crispEdges"><polyline points="1,1 6,4.5 1,8" fill="none" stroke="#e8e8e8" stroke-width="1.2"/></svg>
<div class="r" style="left:456px;top:403px;width:17px;height:158px;background:#0b5a1a;"></div>
<div class="t" style="left:456px;top:403px;width:17px;height:158px;"><div style="position:absolute;left:50%;top:78px;transform:translate(-50%,-50%) rotate(-90deg);font-size:11px;line-height:11px;color:#f0f0f0;white-space:nowrap;letter-spacing:-0.2px;">Benutzerdefiniert</div></div>
<div class="t" style="left:480.5px;top:410.69px;font-size:11px;line-height:11px;color:#80fa80;font-weight:normal;font-family:'Liberation Sans', sans-serif;letter-spacing:-0.2px;">Features:</div>
<div class="r" style="left:556px;top:403px;width:134px;height:20px;background:#2a2a2c;border:1px solid #6a6a6a;box-sizing:border-box;"></div>
<div class="t" style="left:561.5px;top:407.69px;font-size:11px;line-height:11px;color:#f0f0f0;font-weight:normal;font-family:'Liberation Sans', sans-serif;letter-spacing:-0.2px;width:127.5px;overflow:hidden;">Mappack</div>
<div class="t" style="left:480.5px;top:432.69px;font-size:11px;line-height:11px;color:#80fa80;font-weight:normal;font-family:'Liberation Sans', sans-serif;letter-spacing:-0.2px;">Benutzer 2:</div>
<div class="r" style="left:556px;top:426px;width:134px;height:20px;background:#2a2a2c;border:1px solid #6a6a6a;box-sizing:border-box;"></div>
<div class="t" style="left:480.5px;top:455.69px;font-size:11px;line-height:11px;color:#80fa80;font-weight:normal;font-family:'Liberation Sans', sans-serif;letter-spacing:-0.2px;">Benutzer 3:</div>
<div class="r" style="left:556px;top:449px;width:134px;height:20px;background:#2a2a2c;border:1px solid #6a6a6a;box-sizing:border-box;"></div>
<div class="t" style="left:480.5px;top:478.69px;font-size:11px;line-height:11px;color:#80fa80;font-weight:normal;font-family:'Liberation Sans', sans-serif;letter-spacing:-0.2px;">Benutzer 4:</div>
<div class="r" style="left:556px;top:472px;width:134px;height:20px;background:#2a2a2c;border:1px solid #6a6a6a;box-sizing:border-box;"></div>
<div class="t" style="left:480.5px;top:502.69px;font-size:11px;line-height:11px;color:#80fa80;font-weight:normal;font-family:'Liberation Sans', sans-serif;letter-spacing:-0.2px;">Benutzer 5:</div>
<div class="r" style="left:556px;top:495px;width:134px;height:20px;background:#2a2a2c;border:1px solid #6a6a6a;box-sizing:border-box;"></div>
<div class="t" style="left:480.5px;top:524.69px;font-size:11px;line-height:11px;color:#80fa80;font-weight:normal;font-family:'Liberation Sans', sans-serif;letter-spacing:-0.2px;">Benutzer 6:</div>
<div class="r" style="left:556px;top:518px;width:134px;height:20px;background:#2a2a2c;border:1px solid #6a6a6a;box-sizing:border-box;"></div>
<div class="t" style="left:480.5px;top:547.69px;font-size:11px;line-height:11px;color:#80fa80;font-weight:normal;font-family:'Liberation Sans', sans-serif;letter-spacing:-0.2px;">Benutzer 7:</div>
<div class="r" style="left:556px;top:541px;width:134px;height:20px;background:#2a2a2c;border:1px solid #6a6a6a;box-sizing:border-box;"></div>
<div class="r" style="left:712px;top:99px;width:17px;height:226px;background:#4a4a4a;"></div>
<div class="t" style="left:712px;top:99px;width:17px;height:226px;"><div style="position:absolute;left:50%;top:113px;transform:translate(-50%,-50%) rotate(-90deg);font-size:11px;line-height:11px;color:#f0f0f0;white-space:nowrap;letter-spacing:-0.2px;">Steuerger&auml;t</div></div>
<div class="t" style="left:736px;top:103.69px;font-size:11px;line-height:11px;color:#f0f0f0;font-weight:normal;font-family:'Liberation Sans', sans-serif;letter-spacing:-0.2px;">Verwendung:</div>
<div class="r" style="left:813px;top:99px;width:104px;height:20px;background:#2a2a2c;border:1px solid #6a6a6a;box-sizing:border-box;"></div>
<div class="t" style="left:818.5px;top:103.69px;font-size:11px;line-height:11px;color:#f0f0f0;font-weight:normal;font-family:'Liberation Sans', sans-serif;letter-spacing:-0.2px;width:97.5px;overflow:hidden;">Motor</div>
<div class="r" style="left:918px;top:99px;width:20px;height:20px;background:#2a2a2c;border:1px solid #6a6a6a;box-sizing:border-box;"></div>
<svg class="r" style="left:924px;top:105px;shape-rendering:auto;" width="8" height="9" viewBox="0 0 8 9" shape-rendering="crispEdges"><polyline points="1,1 6,4.5 1,8" fill="none" stroke="#e8e8e8" stroke-width="1.2"/></svg>
<div class="t" style="left:736px;top:129.69px;font-size:11px;line-height:11px;color:#f0f0f0;font-weight:normal;font-family:'Liberation Sans', sans-serif;letter-spacing:-0.2px;">Hersteller:</div>
<div class="r" style="left:813px;top:122px;width:104px;height:20px;background:#2a2a2c;border:1px solid #6a6a6a;box-sizing:border-box;"></div>
<div class="t" style="left:818.5px;top:126.69px;font-size:11px;line-height:11px;color:#f0f0f0;font-weight:normal;font-family:'Liberation Sans', sans-serif;letter-spacing:-0.2px;width:97.5px;overflow:hidden;">Bosch</div>
<div class="r" style="left:918px;top:122px;width:20px;height:20px;background:#2a2a2c;border:1px solid #6a6a6a;box-sizing:border-box;"></div>
<svg class="r" style="left:924px;top:128px;shape-rendering:auto;" width="8" height="9" viewBox="0 0 8 9" shape-rendering="crispEdges"><polyline points="1,1 6,4.5 1,8" fill="none" stroke="#e8e8e8" stroke-width="1.2"/></svg>
<div class="t" style="left:736px;top:152.69px;font-size:11px;line-height:11px;color:#f0f0f0;font-weight:normal;font-family:'Liberation Sans', sans-serif;letter-spacing:-0.2px;">Baureihe:</div>
<div class="r" style="left:813px;top:145px;width:104px;height:20px;background:#2a2a2c;border:1px solid #6a6a6a;box-sizing:border-box;"></div>
<div class="t" style="left:818.5px;top:149.69px;font-size:11px;line-height:11px;color:#f0f0f0;font-weight:normal;font-family:'Liberation Sans', sans-serif;letter-spacing:-0.2px;width:97.5px;overflow:hidden;">EDC17CP44</div>
<div class="r" style="left:918px;top:145px;width:20px;height:20px;background:#2a2a2c;border:1px solid #6a6a6a;box-sizing:border-box;"></div>
<svg class="r" style="left:924px;top:151px;shape-rendering:auto;" width="8" height="9" viewBox="0 0 8 9" shape-rendering="crispEdges"><polyline points="1,1 6,4.5 1,8" fill="none" stroke="#e8e8e8" stroke-width="1.2"/></svg>
<div class="t" style="left:736px;top:174.69px;font-size:11px;line-height:11px;color:#f0f0f0;font-weight:normal;font-family:'Liberation Sans', sans-serif;letter-spacing:-0.2px;">Stgnr.Her.:</div>
<div class="r" style="left:813px;top:168px;width:104px;height:20px;background:#2a2a2c;border:1px solid #6a6a6a;box-sizing:border-box;"></div>
<div class="t" style="left:818.5px;top:172.69px;font-size:11px;line-height:11px;color:#f0f0f0;font-weight:normal;font-family:'Liberation Sans', sans-serif;letter-spacing:-0.2px;width:97.5px;overflow:hidden;">7P0907401F</div>
<div class="r" style="left:918px;top:168px;width:20px;height:20px;background:#2a2a2c;border:1px solid #6a6a6a;box-sizing:border-box;"></div>
<svg class="r" style="left:924px;top:174px;shape-rendering:auto;" width="8" height="9" viewBox="0 0 8 9" shape-rendering="crispEdges"><polyline points="1,1 6,4.5 1,8" fill="none" stroke="#e8e8e8" stroke-width="1.2"/></svg>
<div class="t" style="left:736px;top:197.69px;font-size:11px;line-height:11px;color:#f0f0f0;font-weight:normal;font-family:'Liberation Sans', sans-serif;letter-spacing:-0.2px;">Stgnr.Stg.:</div>
<div class="r" style="left:813px;top:191px;width:104px;height:20px;background:#2a2a2c;border:1px solid #6a6a6a;box-sizing:border-box;"></div>
<div class="t" style="left:818.5px;top:195.69px;font-size:11px;line-height:11px;color:#f0f0f0;font-weight:normal;font-family:'Liberation Sans', sans-serif;letter-spacing:-0.2px;width:97.5px;overflow:hidden;">7P0907401F</div>
<div class="r" style="left:918px;top:191px;width:20px;height:20px;background:#2a2a2c;border:1px solid #6a6a6a;box-sizing:border-box;"></div>
<svg class="r" style="left:924px;top:197px;shape-rendering:auto;" width="8" height="9" viewBox="0 0 8 9" shape-rendering="crispEdges"><polyline points="1,1 6,4.5 1,8" fill="none" stroke="#e8e8e8" stroke-width="1.2"/></svg>
<div class="t" style="left:736px;top:220.69px;font-size:11px;line-height:11px;color:#f0f0f0;font-weight:normal;font-family:'Liberation Sans', sans-serif;letter-spacing:-0.2px;">Softwarestand:</div>
<div class="r" style="left:813px;top:214px;width:104px;height:20px;background:#2a2a2c;border:1px solid #6a6a6a;box-sizing:border-box;"></div>
<div class="t" style="left:818.5px;top:218.69px;font-size:11px;line-height:11px;color:#f0f0f0;font-weight:normal;font-family:'Liberation Sans', sans-serif;letter-spacing:-0.2px;width:97.5px;overflow:hidden;">535387</div>
<div class="r" style="left:918px;top:214px;width:20px;height:20px;background:#2a2a2c;border:1px solid #6a6a6a;box-sizing:border-box;"></div>
<svg class="r" style="left:924px;top:220px;shape-rendering:auto;" width="8" height="9" viewBox="0 0 8 9" shape-rendering="crispEdges"><polyline points="1,1 6,4.5 1,8" fill="none" stroke="#e8e8e8" stroke-width="1.2"/></svg>
<div class="t" style="left:751px;top:242.69px;font-size:11px;line-height:11px;color:#f0f0f0;font-weight:normal;font-family:'Liberation Sans', sans-serif;letter-spacing:-0.2px;">+ Version:</div>
<div class="r" style="left:813px;top:237px;width:104px;height:20px;background:#2a2a2c;border:1px solid #6a6a6a;box-sizing:border-box;"></div>
<div class="t" style="left:818.5px;top:241.69px;font-size:11px;line-height:11px;color:#f0f0f0;font-weight:normal;font-family:'Liberation Sans', sans-serif;letter-spacing:-0.2px;width:97.5px;overflow:hidden;">0005</div>
<div class="r" style="left:918px;top:237px;width:20px;height:20px;background:#2a2a2c;border:1px solid #6a6a6a;box-sizing:border-box;"></div>
<svg class="r" style="left:924px;top:243px;shape-rendering:auto;" width="8" height="9" viewBox="0 0 8 9" shape-rendering="crispEdges"><polyline points="1,1 6,4.5 1,8" fill="none" stroke="#e8e8e8" stroke-width="1.2"/></svg>
<div class="t" style="left:736px;top:266.19px;font-size:11px;line-height:11px;color:#80fa80;font-weight:normal;font-family:'Liberation Sans', sans-serif;letter-spacing:-0.2px;">Benutzer 11:</div>
<div class="r" style="left:813px;top:260px;width:104px;height:20px;background:#2a2a2c;border:1px solid #6a6a6a;box-sizing:border-box;"></div>
<div class="r" style="left:918px;top:260px;width:20px;height:20px;background:#2a2a2c;border:1px solid #6a6a6a;box-sizing:border-box;"></div>
<svg class="r" style="left:924px;top:266px;shape-rendering:auto;" width="8" height="9" viewBox="0 0 8 9" shape-rendering="crispEdges"><polyline points="1,1 6,4.5 1,8" fill="none" stroke="#e8e8e8" stroke-width="1.2"/></svg>
<div class="t" style="left:736px;top:284.69px;font-size:11px;line-height:11px;color:#f0f0f0;font-weight:normal;font-family:'Liberation Sans', sans-serif;letter-spacing:-0.2px;">Checksumme:</div>
<div class="t" style="left:736px;top:307.69px;font-size:11px;line-height:11px;color:#f0f0f0;font-weight:normal;font-family:'Liberation Sans', sans-serif;letter-spacing:-0.2px;">Prozessor:</div>
<div class="t" style="left:815px;top:307.69px;font-size:11px;line-height:11px;color:#f0f0f0;font-weight:normal;font-family:'Liberation Sans', sans-serif;letter-spacing:-0.2px;">nicht erkannt</div>
<div class="r" style="left:712px;top:354px;width:17px;height:181px;background:#0b2a7a;"></div>
<div class="t" style="left:712px;top:354px;width:17px;height:181px;"><div style="position:absolute;left:50%;top:90px;transform:translate(-50%,-50%) rotate(-90deg);font-size:11px;line-height:11px;color:#f0f0f0;white-space:nowrap;letter-spacing:-0.2px;">Motor</div></div>
<div class="t" style="left:736px;top:360.69px;font-size:11px;line-height:11px;color:#f0f0f0;font-weight:normal;font-family:'Liberation Sans', sans-serif;letter-spacing:-0.2px;">Hersteller:</div>
<div class="r" style="left:813px;top:354px;width:104px;height:20px;background:#2a2a2c;border:1px solid #6a6a6a;box-sizing:border-box;"></div>
<div class="t" style="left:815.5px;top:358.69px;font-size:11px;line-height:11px;color:#6e6e6e;font-weight:normal;font-family:'Liberation Sans', sans-serif;letter-spacing:-0.2px;width:100.5px;overflow:hidden;">z.B. Deutz</div>
<div class="r" style="left:918px;top:354px;width:20px;height:20px;background:#2a2a2c;border:1px solid #6a6a6a;box-sizing:border-box;"></div>
<svg class="r" style="left:924px;top:360px;shape-rendering:auto;" width="8" height="9" viewBox="0 0 8 9" shape-rendering="crispEdges"><polyline points="1,1 6,4.5 1,8" fill="none" stroke="#e8e8e8" stroke-width="1.2"/></svg>
<div class="t" style="left:736px;top:382.69px;font-size:11px;line-height:11px;color:#f0f0f0;font-weight:normal;font-family:'Liberation Sans', sans-serif;letter-spacing:-0.2px;">Motorcode:</div>
<div class="r" style="left:813px;top:377px;width:104px;height:20px;background:#2a2a2c;border:1px solid #6a6a6a;box-sizing:border-box;"></div>
<div class="t" style="left:815.5px;top:381.69px;font-size:11px;line-height:11px;color:#6e6e6e;font-weight:normal;font-family:'Liberation Sans', sans-serif;letter-spacing:-0.2px;width:100.5px;overflow:hidden;">z.B. Z19DTH</div>
<div class="t" style="left:736px;top:406.69px;font-size:11px;line-height:11px;color:#f0f0f0;font-weight:normal;font-family:'Liberation Sans', sans-serif;letter-spacing:-0.2px;">Art:</div>
<div class="r" style="left:813px;top:400px;width:104px;height:20px;background:#2a2a2c;border:1px solid #6a6a6a;box-sizing:border-box;"></div>
<div class="t" style="left:818.5px;top:404.69px;font-size:11px;line-height:11px;color:#f0f0f0;font-weight:normal;font-family:'Liberation Sans', sans-serif;letter-spacing:-0.2px;width:97.5px;overflow:hidden;">Turbo-Diesel</div>
<div class="r" style="left:918px;top:400px;width:20px;height:20px;background:#2a2a2c;border:1px solid #6a6a6a;box-sizing:border-box;"></div>
<svg class="r" style="left:924px;top:406px;shape-rendering:auto;" width="8" height="9" viewBox="0 0 8 9" shape-rendering="crispEdges"><polyline points="1,1 6,4.5 1,8" fill="none" stroke="#e8e8e8" stroke-width="1.2"/></svg>
<div class="t" style="left:736px;top:429.69px;font-size:11px;line-height:11px;color:#f0f0f0;font-weight:normal;font-family:'Liberation Sans', sans-serif;letter-spacing:-0.2px;">Hubraum:</div>
<div class="r" style="left:813px;top:423px;width:104px;height:20px;background:#2a2a2c;border:1px solid #6a6a6a;box-sizing:border-box;"></div>
<div class="t" style="left:818.5px;top:427.69px;font-size:11px;line-height:11px;color:#f0f0f0;font-weight:normal;font-family:'Liberation Sans', sans-serif;letter-spacing:-0.2px;width:97.5px;overflow:hidden;">3.0</div>
<div class="t" style="left:921px;top:429.69px;font-size:11px;line-height:11px;color:#f0f0f0;font-weight:normal;font-family:'Liberation Sans', sans-serif;letter-spacing:-0.2px;">L</div>
<div class="t" style="left:736px;top:452.69px;font-size:11px;line-height:11px;color:#80fa80;font-weight:normal;font-family:'Liberation Sans', sans-serif;letter-spacing:-0.2px;">Leistung:</div>
<div class="r" style="left:813px;top:446px;width:41px;height:20px;background:#2a2a2c;border:1px solid #6a6a6a;box-sizing:border-box;"></div>
<div class="t" style="left:819.5px;top:450.69px;font-size:11px;line-height:11px;color:#f0f0f0;font-weight:normal;font-family:'Liberation Sans', sans-serif;letter-spacing:-0.2px;width:33.5px;overflow:hidden;">245.0</div>
<div class="t" style="left:857px;top:452.69px;font-size:11px;line-height:11px;color:#f0f0f0;font-weight:normal;font-family:'Liberation Sans', sans-serif;letter-spacing:-0.2px;">PS</div>
<div class="r" style="left:876px;top:446px;width:41px;height:20px;background:#2a2a2c;border:1px solid #6a6a6a;box-sizing:border-box;"></div>
<div class="t" style="left:882.5px;top:450.69px;font-size:11px;line-height:11px;color:#f0f0f0;font-weight:normal;font-family:'Liberation Sans', sans-serif;letter-spacing:-0.2px;width:33.5px;overflow:hidden;">180.2</div>
<div class="t" style="left:918px;top:452.69px;font-size:11px;line-height:11px;color:#f0f0f0;font-weight:normal;font-family:'Liberation Sans', sans-serif;letter-spacing:-0.2px;">kW</div>
<div class="t" style="left:736px;top:474.69px;font-size:11px;line-height:11px;color:#f0f0f0;font-weight:normal;font-family:'Liberation Sans', sans-serif;letter-spacing:-0.2px;">Max. Drehmom.</div>
<div class="r" style="left:813px;top:469px;width:104px;height:20px;background:#2a2a2c;border:1px solid #6a6a6a;box-sizing:border-box;"></div>
<div class="t" style="left:918px;top:474.69px;font-size:11px;line-height:11px;color:#f0f0f0;font-weight:normal;font-family:'Liberation Sans', sans-serif;letter-spacing:-0.2px;">Nm</div>
<div class="r" style="left:814px;top:471px;width:1px;height:16px;background:#555;"></div>
<div class="t" style="left:736px;top:497.69px;font-size:11px;line-height:11px;color:#f0f0f0;font-weight:normal;font-family:'Liberation Sans', sans-serif;letter-spacing:-0.2px;">Abgasnorm:</div>
<div class="r" style="left:813px;top:492px;width:104px;height:20px;background:#2a2a2c;border:1px solid #6a6a6a;box-sizing:border-box;"></div>
<div class="t" style="left:815.5px;top:496.69px;font-size:11px;line-height:11px;color:#6e6e6e;font-weight:normal;font-family:'Liberation Sans', sans-serif;letter-spacing:-0.2px;width:100.5px;overflow:hidden;">z.B. Euro 5</div>
<div class="r" style="left:918px;top:492px;width:20px;height:20px;background:#2a2a2c;border:1px solid #6a6a6a;box-sizing:border-box;"></div>
<svg class="r" style="left:924px;top:498px;shape-rendering:auto;" width="8" height="9" viewBox="0 0 8 9" shape-rendering="crispEdges"><polyline points="1,1 6,4.5 1,8" fill="none" stroke="#e8e8e8" stroke-width="1.2"/></svg>
<div class="t" style="left:736px;top:521.69px;font-size:11px;line-height:11px;color:#f0f0f0;font-weight:normal;font-family:'Liberation Sans', sans-serif;letter-spacing:-0.2px;">Getriebe:</div>
<div class="r" style="left:813px;top:515px;width:104px;height:20px;background:#2a2a2c;border:1px solid #6a6a6a;box-sizing:border-box;"></div>
<div class="t" style="left:815.5px;top:519.69px;font-size:11px;line-height:11px;color:#6e6e6e;font-weight:normal;font-family:'Liberation Sans', sans-serif;letter-spacing:-0.2px;width:100.5px;overflow:hidden;">z.B. Schaltgetriebe</div>
<div class="r" style="left:918px;top:515px;width:20px;height:20px;background:#2a2a2c;border:1px solid #6a6a6a;box-sizing:border-box;"></div>
<svg class="r" style="left:924px;top:521px;shape-rendering:auto;" width="8" height="9" viewBox="0 0 8 9" shape-rendering="crispEdges"><polyline points="1,1 6,4.5 1,8" fill="none" stroke="#e8e8e8" stroke-width="1.2"/></svg>
<div class="r" style="left:454px;top:575px;width:129px;height:23px;background:#2a2a2c;border:1px solid #0ea0f0;box-sizing:border-box;"></div>
<div class="t" style="left:454px;width:129px;text-align:center;top:581.69px;font-size:11px;line-height:11px;color:#f0f0f0;font-weight:normal;font-family:'Liberation Sans', sans-serif;">OK</div>
<div class="r" style="left:592px;top:575px;width:127px;height:23px;background:#8e1515;border:1px solid #c83030;box-sizing:border-box;"></div>
<div class="t" style="left:602px;top:581.69px;font-size:11px;line-height:11px;color:#f0f0f0;font-weight:normal;font-family:'Liberation Sans', sans-serif;letter-spacing:-0.2px;">Fahrzeugdaten suchen</div>
<div class="r" style="left:718px;top:575px;width:27px;height:23px;background:#2a2a2c;border:1px solid #6a6a6a;box-sizing:border-box;"></div>
<div class="r" style="left:753px;top:575px;width:27px;height:23px;background:#2a2a2c;border:1px solid #6a6a6a;box-sizing:border-box;"></div>
<div class="r" style="left:786px;top:575px;width:27px;height:23px;background:#2a2a2c;border:1px solid #6a6a6a;box-sizing:border-box;"></div>
<div class="r" style="left:819px;top:575px;width:27px;height:23px;background:#2a2a2c;border:1px solid #6a6a6a;box-sizing:border-box;"></div>
<div class="r" style="left:846px;top:575px;width:24px;height:23px;background:#2a2a2c;border:1px solid #1c8ad8;box-sizing:border-box;"></div>
<div class="r" style="left:876px;top:575px;width:27px;height:23px;background:#2a2a2c;border:1px solid #6a6a6a;box-sizing:border-box;"></div>
<div class="r" style="left:912px;top:575px;width:27px;height:23px;background:#2a2a2c;border:1px solid #6a6a6a;box-sizing:border-box;"></div>
<div class="r" style="left:939px;top:575px;width:12px;height:23px;background:#2a2a2c;border:1px solid #6a6a6a;box-sizing:border-box;"></div>
<svg class="r" style="left:722px;top:577px;shape-rendering:auto;" width="18" height="17" viewBox="0 0 18 17" shape-rendering="crispEdges"><rect x="2.5" y="3.5" width="12" height="10" fill="#cfc870" stroke="#8a8450" stroke-width="1"/><path d="M6 2.5 Q9 0 12 2.5 L12 5 L6 5 Z" fill="#d8d8d8" stroke="#777" stroke-width="0.8"/><rect x="8.5" y="7.5" width="8" height="7" fill="#fff" stroke="#2a6ae0" stroke-width="1.2"/><rect x="10" y="9.5" width="3.5" height="1" fill="#2a6ae0"/><rect x="10" y="11.5" width="5" height="1" fill="#2a6ae0"/></svg>
<svg class="r" style="left:757px;top:577px;shape-rendering:auto;" width="18" height="18" viewBox="0 0 18 18" shape-rendering="crispEdges"><circle cx="8.2" cy="8.5" r="7.6" fill="#fff"/><circle cx="8.2" cy="8.5" r="6.4" fill="#30d8f0"/><path d="M2.5 6 Q4 2.5 7 2.5 L6 7 Q4 10 3 11 Q1.8 9 2.5 6 Z" fill="#3ac040"/><path d="M10 2.5 Q13.5 3.5 14.5 7 L12 8 Z" fill="#3ac040"/><path d="M9.5 6 L13.5 6 L13.5 10 L16.5 10 L11.5 16 L6.5 10 L9.5 10 Z" fill="#2a50ff" stroke="#002" stroke-width="0.6"/></svg>
<svg class="r" style="left:790px;top:577px;shape-rendering:auto;" width="18" height="18" viewBox="0 0 18 18" shape-rendering="crispEdges"><circle cx="8.2" cy="8.5" r="7.6" fill="#fff"/><circle cx="8.2" cy="8.5" r="6.4" fill="#30d8f0"/><path d="M2.5 6 Q4 2.5 7 2.5 L6 7 Q4 10 3 11 Q1.8 9 2.5 6 Z" fill="#3ac040"/><path d="M10 2.5 Q13.5 3.5 14.5 7 L12 8 Z" fill="#3ac040"/><path d="M9.5 17 L13.5 17 L13.5 13 L16.5 13 L11.5 7 L6.5 13 L9.5 13 Z" fill="#ff4040" stroke="#300" stroke-width="0.6"/></svg>
<svg class="r" style="left:823px;top:578px;shape-rendering:auto;" width="18" height="15" viewBox="0 0 18 15" shape-rendering="crispEdges"><path d="M4 1.5 L13 1.5 Q16.5 1.5 16.5 5 Q16.5 9 13 9 L12 9 L11.5 12.5 L10 9 L4 9 Q1.5 9 1.5 5 Q1.5 1.5 4 1.5 Z" fill="#fff" stroke="#000" stroke-width="0.8"/></svg>
<svg class="r" style="left:851px;top:583px;shape-rendering:auto;" width="15" height="9" viewBox="0 0 15 9" shape-rendering="crispEdges"><path d="M6 1 L1 4.5 L6 8 M13 1 L8 4.5 L13 8" fill="none" stroke="#d8d8d8" stroke-width="1.1"/></svg>
<div class="t" style="left:885.5px;top:580.50px;font-size:13px;line-height:13px;color:#e0e0e0;font-weight:normal;font-family:'Liberation Sans', sans-serif;">&sect;</div>
<svg class="r" style="left:915px;top:576px;shape-rendering:auto;" width="20" height="18" viewBox="0 0 20 18" shape-rendering="crispEdges"><path d="M4.5 1.5 L14 1.5 L17.5 5 L17.5 16.5 L4.5 16.5 Z" fill="#f4f4f4" stroke="#999" stroke-width="0.8"/><rect x="9" y="5" width="7" height="1" fill="#8899aa"/><rect x="9" y="7.5" width="7" height="1" fill="#8899aa"/><rect x="9" y="10" width="7" height="1" fill="#8899aa"/><rect x="9" y="12.5" width="7" height="1" fill="#8899aa"/><rect x="6" y="14.5" width="10" height="1" fill="#8899aa"/><circle cx="6.5" cy="9.5" r="3.6" fill="none" stroke="#7090c0" stroke-width="2" stroke-dasharray="1.4 1"/><circle cx="6.5" cy="9.5" r="1.6" fill="#e8eef8"/></svg>
<svg class="r" style="left:941px;top:584px;shape-rendering:auto;" width="6" height="4" viewBox="0 0 6 4" shape-rendering="crispEdges"><path d="M0 0 L6 0 L3 3 Z" fill="#ccc"/></svg>
</body></html>
